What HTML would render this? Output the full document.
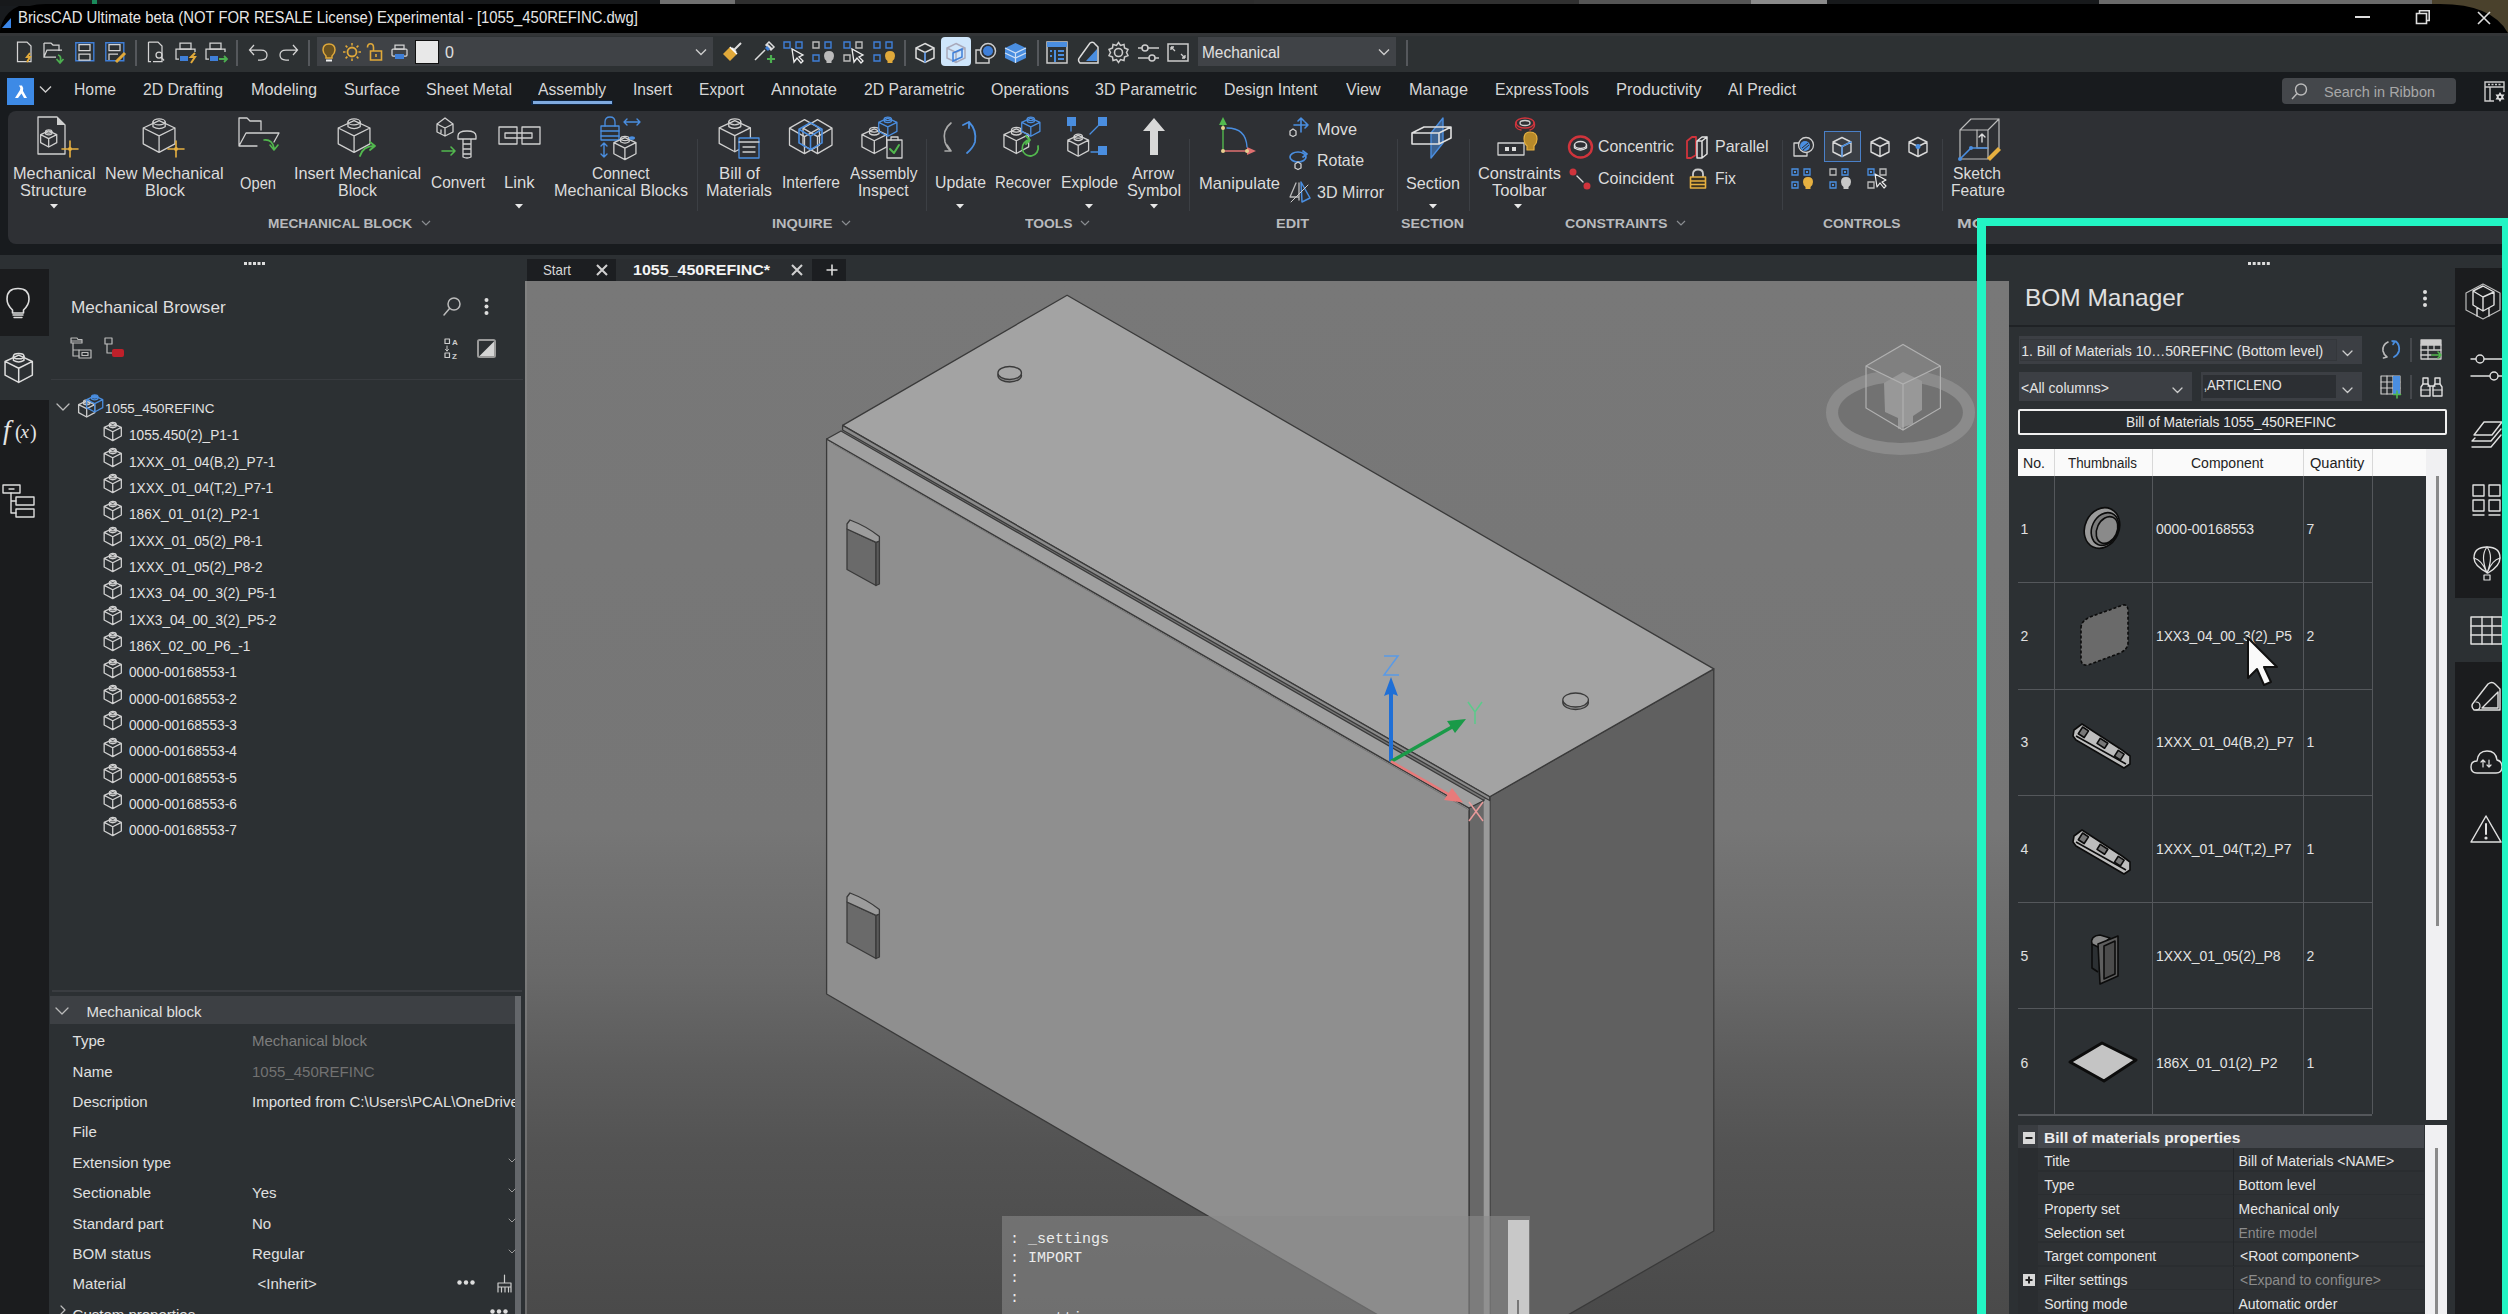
<!DOCTYPE html>
<html><head><meta charset="utf-8">
<style>
*{margin:0;padding:0;box-sizing:border-box}
html,body{width:2508px;height:1314px;overflow:hidden;background:#181b1e;font-family:"Liberation Sans",sans-serif;color:#dcdcdc}
.a{position:absolute}
.t{position:absolute;white-space:nowrap;line-height:1}
svg{position:absolute;overflow:visible}
svg *{vector-effect:non-scaling-stroke}
</style></head><body>

<div class="a" style="left:0;top:0;width:2508px;height:6px;background:#222"></div>
<div class="a" style="left:1577px;top:0;width:247px;height:5px;background:#777"></div>
<div class="a" style="left:2100px;top:0;width:408px;height:40px;background:#4b4230"></div>
<div class="a" style="left:0;top:4px;width:2508px;height:30px;background:#000;border-radius:38px 38px 0 0"></div>
<div class="a" style="left:0;top:33px;width:2508px;height:39px;background:#2d3133"></div>
<div class="a" style="left:0;top:72px;width:2508px;height:38px;background:#181b1e"></div>

<div class="a" style="left:0;top:254px;width:2508px;height:1060px;background:#2c3033"></div>

<div class="a" style="left:0px;top:0px;width:2508px;height:6px;background:#17191b;"></div>
<div class="a" style="left:660px;top:0px;width:75px;height:5px;background:#707070;"></div>
<div class="a" style="left:735px;top:0px;width:519px;height:5px;background:#2e2e2e;"></div>
<div class="a" style="left:1254px;top:0px;width:325px;height:5px;background:#303030;"></div>
<div class="a" style="left:1579px;top:0px;width:172px;height:5px;background:#555;"></div>
<div class="a" style="left:1751px;top:0px;width:76px;height:5px;background:#8a8a8a;"></div>
<div class="a" style="left:2099px;top:0px;width:333px;height:5px;background:#6a6a6a;"></div>
<div class="a" style="left:92px;top:0px;width:5px;height:4px;background:#1a8a5a;"></div>
<div class="a" style="left:2432px;top:0px;width:76px;height:40px;background:#4a412c;"></div>
<div class="a" style="left:0px;top:4px;width:2441px;height:29px;background:#000;border-radius:46px 0 0 0/28px 0 0 0"></div>
<svg style="left:2440px;top:4px;" width="68" height="29" viewBox="0 0 68 29" fill="none"><path d="M0 0 Q52 0 68 29 H0 Z" fill="#000"/></svg>
<svg style="left:2px;top:18px;" width="10" height="11" viewBox="0 0 10 11" fill="none"><path d="M9 0 L9 10 L0 10 Z" fill="#3a86e8"/></svg>
<div class="t" style="left:18.3px;top:10.4px;font-size:16px;color:#e6e6e6;transform:scaleX(0.9288);transform-origin:0 0;">BricsCAD Ultimate beta (NOT FOR RESALE License) Experimental - [1055_450REFINC.dwg]</div>
<div class="a" style="left:2355px;top:16px;width:15px;height:2px;background:#ddd;"></div>
<svg style="left:2416px;top:10px;" width="14" height="14" viewBox="0 0 14 14" fill="none"><rect x="0.5" y="3.5" width="10" height="10" stroke="#ddd" stroke-width="1.6"/><path d="M3.5 3.5 V0.8 H13.2 V10.5 H10.5" stroke="#ddd" stroke-width="1.6"/></svg>
<svg style="left:2477px;top:11px;" width="14" height="14" viewBox="0 0 14 14" fill="none"><path d="M1 1 L13 13 M13 1 L1 13" stroke="#ddd" stroke-width="1.6"/></svg>
<div class="a" style="left:0px;top:33px;width:2508px;height:39px;background:#2d3133;"></div>
<div class="a" style="left:0px;top:33px;width:2508px;height:3px;background:#333537;"></div>
<svg style="left:16px;top:41px;" width="22" height="22" viewBox="0 0 22 22" fill="none"><path d="M1.5 1 H11 L15 5 V20.5 H1.5 Z" stroke="#d4d4d4" stroke-width="1.25"/><path d="M14 12 L11 16 H14 L11 21" stroke="#e0a93a" stroke-width="2"/></svg>
<svg style="left:43px;top:42px;" width="24" height="22" viewBox="0 0 24 22" fill="none"><path d="M1 1 H8 L10 3 H16 V9 M1 1 V15 H13 M1 15 L4 8 H19" stroke="#d4d4d4" stroke-width="1.25"/><path d="M15 13 Q19 14 17 20 M13.5 17 L17 21 L20.5 17" stroke="#4caf50" stroke-width="1.8"/></svg>
<svg style="left:75px;top:42px;" width="20" height="20" viewBox="0 0 20 20" fill="none"><rect x="0.8" y="0.8" width="18" height="18" stroke="#3f7fd8" stroke-width="1.4"/><rect x="4" y="2.5" width="11" height="6" stroke="#d4d4d4" stroke-width="1.25"/><rect x="4" y="12" width="11" height="6" stroke="#d4d4d4" stroke-width="1.25"/></svg>
<svg style="left:105px;top:42px;" width="22" height="21" viewBox="0 0 22 21" fill="none"><rect x="0.8" y="0.8" width="18" height="18" stroke="#3f7fd8" stroke-width="1.4"/><rect x="4" y="2.5" width="11" height="6" stroke="#d4d4d4" stroke-width="1.25"/><path d="M4 18 V12 H13" stroke="#d4d4d4" stroke-width="1.25"/><path d="M11 20 L20 11" stroke="#e0a93a" stroke-width="3"/></svg>
<div class="a" style="left:135px;top:40px;width:1.5px;height:26px;background:#55585c;"></div>
<svg style="left:147px;top:41px;" width="20" height="22" viewBox="0 0 20 22" fill="none"><path d="M1.5 1 H11 L15 5 V20.5 H6 M1.5 1 V20.5 H4" stroke="#d4d4d4" stroke-width="1.25"/><circle cx="12" cy="14" r="3" stroke="#d4d4d4" stroke-width="1.25"/><path d="M14 16 L17 19.5" stroke="#d4d4d4" stroke-width="1.25"/></svg>
<svg style="left:175px;top:42px;" width="23" height="22" viewBox="0 0 23 22" fill="none"><rect x="5" y="1" width="11" height="6" stroke="#d4d4d4" stroke-width="1.25"/><path d="M4 17 H1 V7 H20 V10" stroke="#d4d4d4" stroke-width="1.25"/><rect x="5" y="14" width="8" height="5" fill="#3f7fd8"/><path d="M20 11 L16 15 H20 L16 21" stroke="#e0a93a" stroke-width="2"/></svg>
<svg style="left:205px;top:42px;" width="23" height="22" viewBox="0 0 23 22" fill="none"><rect x="5" y="1" width="11" height="6" stroke="#d4d4d4" stroke-width="1.25"/><path d="M4 17 H1 V7 H20 V10" stroke="#d4d4d4" stroke-width="1.25"/><rect x="5" y="14" width="8" height="5" fill="#3f7fd8"/><path d="M14 17 H22 M19 14 L22 17 L19 20" stroke="#4caf50" stroke-width="1.8"/></svg>
<div class="a" style="left:236px;top:40px;width:1.5px;height:26px;background:#55585c;"></div>
<svg style="left:248px;top:43px;" width="21" height="18" viewBox="0 0 21 18" fill="none"><path d="M2 7 H13 Q19 7 19 12 Q19 17 13 17 H10 M6 2 L1.5 7 L6 12" stroke="#d4d4d4" stroke-width="1.25"/></svg>
<svg style="left:278px;top:43px;" width="21" height="18" viewBox="0 0 21 18" fill="none"><path d="M19 7 H8 Q2 7 2 12 Q2 17 8 17 H11 M15 2 L19.5 7 L15 12" stroke="#d4d4d4" stroke-width="1.25"/></svg>
<div class="a" style="left:308px;top:40px;width:1.5px;height:26px;background:#55585c;"></div>
<div class="a" style="left:317px;top:37px;width:396px;height:29px;background:#3f4246;"></div>
<svg style="left:322px;top:43px;" width="14" height="20" viewBox="0 0 14 20" fill="none"><path d="M7 1 Q13 1 13 7 Q13 10 10 13 V15 H4 V13 Q1 10 1 7 Q1 1 7 1Z" fill="#6a5220" stroke="#e0a93a" stroke-width="1.5"/><path d="M4 17.5 H10" stroke="#eee" stroke-width="2"/></svg>
<svg style="left:343px;top:43px;" width="18" height="18" viewBox="0 0 18 18" fill="none"><circle cx="9" cy="9" r="4.5" stroke="#e0a93a" stroke-width="1.8"/><path d="M9 0 V2.5 M9 15.5 V18 M0 9 H2.5 M15.5 9 H18 M2.6 2.6 L4.4 4.4 M13.6 13.6 L15.4 15.4 M2.6 15.4 L4.4 13.6 M13.6 4.4 L15.4 2.6" stroke="#e0a93a" stroke-width="1.5"/></svg>
<svg style="left:366px;top:43px;" width="16" height="18" viewBox="0 0 16 18" fill="none"><path d="M1.5 4.5 Q1.5 0.8 4.5 0.8 Q7.5 0.8 7.5 4.5 V8" stroke="#e0a93a" stroke-width="1.6"/><rect x="4.5" y="8" width="11" height="9" stroke="#e0a93a" stroke-width="1.6"/><path d="M10 11 V14" stroke="#e0a93a" stroke-width="1.6"/></svg>
<svg style="left:391px;top:44px;" width="17" height="16" viewBox="0 0 17 16" fill="none"><rect x="4" y="1" width="9" height="4" stroke="#d4d4d4" stroke-width="1.25"/><rect x="1" y="5" width="15" height="7" rx="1" stroke="#d4d4d4" stroke-width="1.25"/><rect x="4" y="10" width="9" height="5" fill="#3f7fd8"/></svg>
<div class="a" style="left:415px;top:40px;width:24px;height:24px;background:#e8e8e8;border:1.5px solid #111"></div>
<div class="t" style="left:445.0px;top:44.5px;font-size:16px;color:#e0e0e0;">0</div>
<svg style="left:695px;top:48px;" width="12" height="8" viewBox="0 0 12 8" fill="none"><path d="M1 1.5 L6 6.5 L11 1.5" stroke="#ccc" stroke-width="1.4"/></svg>
<svg style="left:721px;top:41px;" width="22" height="22" viewBox="0 0 22 22" fill="none"><path d="M13 9 L20 2 M11 7 L15 11" stroke="#ddd" stroke-width="2"/><path d="M2 13 L9 6 L16 13 L9 20 Z" fill="#e0a93a"/><path d="M9 6 L16 13" stroke="#fff" stroke-width="1.5"/></svg>
<svg style="left:752px;top:41px;" width="23" height="23" viewBox="0 0 23 23" fill="none"><path d="M3 19 L13 9 M15 3 L20 8 M17 1 L22 6 L19 9 L14 4Z" stroke="#ddd" stroke-width="1.5"/><path d="M14 6 L17 9" stroke="#3f7fd8" stroke-width="3"/><path d="M15 18 H23 M19 14 V22" stroke="#4caf50" stroke-width="2.2"/></svg>
<svg style="left:783px;top:41px;" width="23" height="23" viewBox="0 0 23 23" fill="none"><rect x="1" y="1" width="6" height="6" stroke="#3f7fd8" stroke-width="1.4"/><rect x="13" y="1" width="6" height="6" stroke="#3f7fd8" stroke-width="1.4"/><path d="M9 8 L11 21 L14 17 L18 22 L20 20 L16 16 L20 14 Z" fill="#2c2f33" stroke="#eee" stroke-width="1.3"/></svg>
<svg style="left:812px;top:41px;" width="24" height="23" viewBox="0 0 24 23" fill="none"><rect x="1" y="1" width="6" height="6" stroke="#bbb" stroke-width="1.4"/><rect x="13" y="1" width="6" height="6" stroke="#3f7fd8" stroke-width="1.4"/><rect x="1" y="14" width="6" height="6" stroke="#3f7fd8" stroke-width="1.4"/><path d="M17 10 Q22 10 22 15 Q22 18 19.5 20 V22 H14.5 V20 Q12 18 12 15 Q12 10 17 10Z" fill="#bbb"/></svg>
<svg style="left:843px;top:41px;" width="24" height="23" viewBox="0 0 24 23" fill="none"><rect x="1" y="1" width="6" height="6" stroke="#3f7fd8" stroke-width="1.4"/><rect x="13" y="1" width="6" height="6" stroke="#bbb" stroke-width="1.4"/><rect x="1" y="14" width="6" height="6" stroke="#bbb" stroke-width="1.4"/><path d="M9 8 L11 21 L14 17 L18 22 L20 20 L16 16 L20 14 Z" fill="#2c2f33" stroke="#eee" stroke-width="1.3"/></svg>
<svg style="left:873px;top:41px;" width="24" height="23" viewBox="0 0 24 23" fill="none"><rect x="1" y="1" width="6" height="6" stroke="#3f7fd8" stroke-width="1.4"/><rect x="13" y="1" width="6" height="6" stroke="#3f7fd8" stroke-width="1.4"/><rect x="1" y="14" width="6" height="6" stroke="#3f7fd8" stroke-width="1.4"/><path d="M17 10 Q22 10 22 15 Q22 18 19.5 20 V22 H14.5 V20 Q12 18 12 15 Q12 10 17 10Z" fill="#e0a93a"/></svg>
<div class="a" style="left:904px;top:40px;width:1.5px;height:26px;background:#55585c;"></div>
<svg style="left:914px;top:42px;" width="22" height="22" viewBox="0 0 22 22" fill="none"><path d="M11 1.5 L20 6 V16 L11 20.5 L2 16 V6 Z M2 6 L11 10.5 L20 6 M11 10.5 V20.5" stroke="#ddd" stroke-width="1.5"/><path d="M11 10.5 V20.5" stroke="#3f7fd8" stroke-width="1.5"/></svg>
<div class="a" style="left:941px;top:37px;width:30px;height:29px;background:#cfe6fb;border-radius:4px"></div>
<svg style="left:945px;top:42px;" width="22" height="22" viewBox="0 0 22 22" fill="none"><path d="M11 1.5 L20 6 V16 L11 20.5 L2 16 V6 Z M2 6 L11 10.5 L20 6 M11 10.5 V20.5" stroke="#aab" stroke-width="1.5"/><path d="M8 11 L17 7 V15 L8 19Z" stroke="#3f7fd8" stroke-width="1.5"/></svg>
<svg style="left:975px;top:42px;" width="23" height="22" viewBox="0 0 23 22" fill="none"><rect x="1" y="8" width="13" height="13" stroke="#ccc" stroke-width="1.5"/><circle cx="13" cy="9" r="7.5" stroke="#ccc" stroke-width="1.5" fill="#2c2f33"/><circle cx="13" cy="9" r="5" fill="#3f7fd8"/></svg>
<svg style="left:1004px;top:42px;" width="23" height="22" viewBox="0 0 23 22" fill="none"><path d="M11.5 1 L22 6 V16 L11.5 21 L1 16 V6 Z" fill="#4a8ee0"/><path d="M1 6 L11.5 11 L22 6 M11.5 11 V21 M1 11 L11.5 16 L22 11" stroke="#cfe0f5" stroke-width="1.2"/></svg>
<div class="a" style="left:1037px;top:40px;width:1.5px;height:26px;background:#55585c;"></div>
<svg style="left:1046px;top:41px;" width="22" height="23" viewBox="0 0 22 23" fill="none"><rect x="1" y="1" width="20" height="21" stroke="#ccc" stroke-width="1.5"/><rect x="1" y="1" width="20" height="5" fill="#4a8ee0"/><path d="M4 10 H6 M4 15 H6 M9 9 V21 M12 10 H18 M12 14 H18 M12 18 H18" stroke="#4a8ee0" stroke-width="2"/></svg>
<svg style="left:1077px;top:41px;" width="22" height="23" viewBox="0 0 22 23" fill="none"><path d="M3 22 Q0 19 3 16 L13 2 Q16 0 18 3 L21 6 V22 Z" stroke="#ddd" stroke-width="1.5"/><path d="M9 20 L20 8 V20Z" fill="#4a8ee0"/></svg>
<svg style="left:1107px;top:41px;" width="23" height="23" viewBox="0 0 23 23" fill="none"><circle cx="11.5" cy="11.5" r="4" stroke="#ccc" stroke-width="1.6"/><path d="M11.5 1.5 L13.5 4.5 L17 3.5 L17.5 7 L21 8.5 L19.5 11.5 L21 14.5 L17.5 16 L17 19.5 L13.5 18.5 L11.5 21.5 L9.5 18.5 L6 19.5 L5.5 16 L2 14.5 L3.5 11.5 L2 8.5 L5.5 7 L6 3.5 L9.5 4.5 Z" stroke="#ccc" stroke-width="1.5"/></svg>
<svg style="left:1137px;top:43px;" width="23" height="20" viewBox="0 0 23 20" fill="none"><path d="M1 5 H22 M1 15 H22" stroke="#ccc" stroke-width="1.5"/><circle cx="8" cy="5" r="3" fill="#2c2f33" stroke="#ccc" stroke-width="1.5"/><circle cx="15" cy="15" r="3" fill="#2c2f33" stroke="#ccc" stroke-width="1.5"/></svg>
<svg style="left:1167px;top:43px;" width="22" height="20" viewBox="0 0 22 20" fill="none"><rect x="1" y="1" width="20" height="17" stroke="#ccc" stroke-width="1.5"/><path d="M4 4 L8 8 M4 4 H7 M4 4 V7 M18 15 L14 11 M18 15 H15 M18 15 V12" stroke="#ccc" stroke-width="1.3"/></svg>
<div class="a" style="left:1198px;top:37px;width:198px;height:29px;background:#404347;"></div>
<div class="t" style="left:1202.0px;top:45.0px;font-size:16px;color:#e0e0e0;transform:scaleX(0.9638);transform-origin:0 0;">Mechanical</div>
<svg style="left:1378px;top:48px;" width="12" height="8" viewBox="0 0 12 8" fill="none"><path d="M1 1.5 L6 6.5 L11 1.5" stroke="#ccc" stroke-width="1.4"/></svg>
<div class="a" style="left:1406px;top:40px;width:1.5px;height:26px;background:#55585c;"></div>
<div class="a" style="left:0px;top:72px;width:2508px;height:38px;background:#181b1e;"></div>
<div class="a" style="left:7px;top:78px;width:27px;height:27px;background:#3d8ae6;"></div>
<svg style="left:12px;top:84px;" width="17" height="15" viewBox="0 0 17 15" fill="none"><path d="M3 14 L8 6 Q9 4 7 1.5 H10 Q12 4 11 7 L15 14 H12 L9.5 9.5 L6 14 Z" fill="#fff"/></svg>
<svg style="left:39px;top:85px;" width="14" height="9" viewBox="0 0 14 9" fill="none"><path d="M1 1.5 L6.5 7 L12 1.5" stroke="#ccc" stroke-width="1.4"/></svg>
<div class="t" style="left:74.0px;top:81.0px;font-size:17px;color:#d6d6d6;transform:scaleX(0.9262);transform-origin:0 0;">Home</div>
<div class="t" style="left:143.0px;top:81.0px;font-size:17px;color:#d6d6d6;transform:scaleX(0.9305);transform-origin:0 0;">2D Drafting</div>
<div class="t" style="left:251.0px;top:81.0px;font-size:17px;color:#d6d6d6;transform:scaleX(0.9567);transform-origin:0 0;">Modeling</div>
<div class="t" style="left:344.0px;top:81.0px;font-size:17px;color:#d6d6d6;transform:scaleX(0.9558);transform-origin:0 0;">Surface</div>
<div class="t" style="left:426.0px;top:81.0px;font-size:17px;color:#d6d6d6;transform:scaleX(0.9480);transform-origin:0 0;">Sheet Metal</div>
<div class="t" style="left:538.0px;top:81.0px;font-size:17px;color:#d6d6d6;transform:scaleX(0.9228);transform-origin:0 0;">Assembly</div>
<div class="t" style="left:633.0px;top:81.0px;font-size:17px;color:#d6d6d6;transform:scaleX(0.9173);transform-origin:0 0;">Insert</div>
<div class="t" style="left:699.0px;top:81.0px;font-size:17px;color:#d6d6d6;transform:scaleX(0.9159);transform-origin:0 0;">Export</div>
<div class="t" style="left:771.0px;top:81.0px;font-size:17px;color:#d6d6d6;transform:scaleX(0.9697);transform-origin:0 0;">Annotate</div>
<div class="t" style="left:864.0px;top:81.0px;font-size:17px;color:#d6d6d6;transform:scaleX(0.9251);transform-origin:0 0;">2D Parametric</div>
<div class="t" style="left:991.0px;top:81.0px;font-size:17px;color:#d6d6d6;transform:scaleX(0.9380);transform-origin:0 0;">Operations</div>
<div class="t" style="left:1095.0px;top:81.0px;font-size:17px;color:#d6d6d6;transform:scaleX(0.9389);transform-origin:0 0;">3D Parametric</div>
<div class="t" style="left:1223.5px;top:81.0px;font-size:17px;color:#d6d6d6;transform:scaleX(0.9334);transform-origin:0 0;">Design Intent</div>
<div class="t" style="left:1345.5px;top:81.0px;font-size:17px;color:#d6d6d6;transform:scaleX(0.9442);transform-origin:0 0;">View</div>
<div class="t" style="left:1409.0px;top:81.0px;font-size:17px;color:#d6d6d6;transform:scaleX(0.9604);transform-origin:0 0;">Manage</div>
<div class="t" style="left:1495.0px;top:81.0px;font-size:17px;color:#d6d6d6;transform:scaleX(0.9298);transform-origin:0 0;">ExpressTools</div>
<div class="t" style="left:1616.0px;top:81.0px;font-size:17px;color:#d6d6d6;transform:scaleX(0.9731);transform-origin:0 0;">Productivity</div>
<div class="t" style="left:1728.0px;top:81.0px;font-size:17px;color:#d6d6d6;transform:scaleX(0.9227);transform-origin:0 0;">AI Predict</div>
<div class="a" style="left:531px;top:99.5px;width:82px;height:5.5px;background:#0e2440;"></div>
<div class="a" style="left:532.5px;top:101px;width:79px;height:2.6px;background:#7eaae0;"></div>
<div class="a" style="left:2282px;top:78px;width:174px;height:26px;background:#44474b;border-radius:4px"></div>
<svg style="left:2291px;top:83px;" width="16" height="18" viewBox="0 0 16 18" fill="none"><circle cx="10" cy="6.5" r="5.5" stroke="#bbb" stroke-width="1.4"/><path d="M6 10.5 L1 16" stroke="#bbb" stroke-width="1.4"/></svg>
<div class="t" style="left:2324.0px;top:85.1px;font-size:14px;color:#a8a8a8;transform:scaleX(1.0335);transform-origin:0 0;">Search in Ribbon</div>
<svg style="left:2484px;top:81px;" width="21" height="22" viewBox="0 0 21 22" fill="none"><rect x="1" y="1" width="19" height="19" stroke="#ccc" stroke-width="1.4"/><path d="M1 6 H20 M6 6 V20" stroke="#ccc" stroke-width="1.4"/><path d="M4 3.5 H17" stroke="#ccc" stroke-width="1.4" stroke-dasharray="2 1.5"/><rect x="10" y="11" width="11" height="11" fill="#181b1e"/><path d="M16 11 L17.5 13.5 L20.5 13.5 L19 16 L20.5 18.5 L17.5 18.5 L16 21 L14.5 18.5 L11.5 18.5 L13 16 L11.5 13.5 L14.5 13.5 Z" fill="#ddd"/><circle cx="16" cy="16" r="1.3" fill="#181b1e"/></svg>
<div class="a" style="left:8px;top:111px;width:2520px;height:133px;background:#2e3034;border-radius:8px"></div>
<svg style="left:36px;top:116px;" width="44" height="44" viewBox="0 0 44 44" fill="none"><path d="M2 1 H21 L29 9 V38 H2 Z" stroke="#cfcfcf" stroke-width="1.3" stroke-linejoin="round" stroke-linecap="round"/><path d="M21 1 V9 H29" fill="#cfcfcf"/><g transform="translate(4 13) scale(0.62)"><path d="M1 9 L14 3 L27 9 V22 L14 29 L1 22 Z M1 9 L14 15.5 L27 9 M14 15.5 V29" stroke="#cfcfcf" stroke-width="1.3" stroke-linejoin="round" stroke-linecap="round"/><ellipse cx="14" cy="4" rx="5" ry="2.5" stroke="#cfcfcf" stroke-width="1.3" stroke-linejoin="round" stroke-linecap="round"/><path d="M9 4 V8 Q14 11 19 8 V4" stroke="#cfcfcf" stroke-width="1.3" stroke-linejoin="round" stroke-linecap="round"/></g><path d="M34 25 V41 M26 33 H42" stroke="#e6b040" stroke-width="1.6" stroke-linejoin="round" stroke-linecap="round"/><circle cx="34" cy="33" r="2" fill="#e6b040"/></svg>
<div class="t" style="left:12.5px;top:165.4px;font-size:16.5px;color:#dcdcdc;transform:scaleX(0.9885);transform-origin:0 0;">Mechanical</div>
<div class="t" style="left:20.0px;top:182.2px;font-size:16.5px;color:#dcdcdc;transform:scaleX(0.9934);transform-origin:0 0;">Structure</div>
<svg style="left:49.5px;top:204px;" width="8" height="5" viewBox="0 0 8 5" fill="none"><path d="M0 0 H8 L4 4.5Z" fill="#e8e8e8"/></svg>
<svg style="left:141px;top:116px;" width="44" height="44" viewBox="0 0 44 44" fill="none"><g transform="translate(1 1) scale(1.22)"><path d="M1 9 L14 3 L27 9 V22 L14 29 L1 22 Z M1 9 L14 15.5 L27 9 M14 15.5 V29" stroke="#cfcfcf" stroke-width="1.3" stroke-linejoin="round" stroke-linecap="round"/><ellipse cx="14" cy="4" rx="5" ry="2.5" stroke="#cfcfcf" stroke-width="1.3" stroke-linejoin="round" stroke-linecap="round"/><path d="M9 4 V8 Q14 11 19 8 V4" stroke="#cfcfcf" stroke-width="1.3" stroke-linejoin="round" stroke-linecap="round"/></g><path d="M35 25 V41 M27 33 H43" stroke="#e6b040" stroke-width="1.6" stroke-linejoin="round" stroke-linecap="round"/><circle cx="35" cy="33" r="2" fill="#e6b040"/></svg>
<div class="t" style="left:104.5px;top:165.4px;font-size:16.5px;color:#dcdcdc;transform:scaleX(0.9789);transform-origin:0 0;">New Mechanical</div>
<div class="t" style="left:144.5px;top:182.2px;font-size:16.5px;color:#dcdcdc;transform:scaleX(0.9914);transform-origin:0 0;">Block</div>
<svg style="left:237px;top:117px;" width="44" height="42" viewBox="0 0 44 42" fill="none"><path d="M2 1 H10 L13 4 H24 V13 M2 1 V29 H20 M2 29 L9 16 H42 L37 25" stroke="#cfcfcf" stroke-width="1.3" stroke-linejoin="round" stroke-linecap="round"/><path d="M27 23 Q35 22 37 31 M33 28 L37 33 L41 28" stroke="#52b84e" stroke-width="1.6" stroke-linejoin="round" stroke-linecap="round"/></svg>
<div class="t" style="left:240.0px;top:174.7px;font-size:16.5px;color:#dcdcdc;transform:scaleX(0.8919);transform-origin:0 0;">Open</div>
<svg style="left:336px;top:116px;" width="44" height="44" viewBox="0 0 44 44" fill="none"><g transform="translate(1 1) scale(1.22)"><path d="M1 9 L14 3 L27 9 V22 L14 29 L1 22 Z M1 9 L14 15.5 L27 9 M14 15.5 V29" stroke="#cfcfcf" stroke-width="1.3" stroke-linejoin="round" stroke-linecap="round"/><ellipse cx="14" cy="4" rx="5" ry="2.5" stroke="#cfcfcf" stroke-width="1.3" stroke-linejoin="round" stroke-linecap="round"/><path d="M9 4 V8 Q14 11 19 8 V4" stroke="#cfcfcf" stroke-width="1.3" stroke-linejoin="round" stroke-linecap="round"/></g><path d="M24 40 Q27 30 38 30 M34 26 L39 30 L34 34" stroke="#52b84e" stroke-width="1.8" stroke-linejoin="round" stroke-linecap="round"/></svg>
<div class="t" style="left:294.0px;top:165.4px;font-size:16.5px;color:#dcdcdc;transform:scaleX(0.9821);transform-origin:0 0;">Insert Mechanical</div>
<div class="t" style="left:338.0px;top:182.2px;font-size:16.5px;color:#dcdcdc;transform:scaleX(0.9666);transform-origin:0 0;">Block</div>
<svg style="left:436px;top:116px;" width="44" height="44" viewBox="0 0 44 44" fill="none"><path d="M1 8 L9 2 L17 8 V16 L9 20 L1 16 Z M1 8 L9 12 L17 8 M9 12 V20 M5 14 V17" stroke="#cfcfcf" stroke-width="1.3" stroke-linejoin="round" stroke-linecap="round"/><path d="M22 20 Q22 15 31 15 Q40 15 40 20 V23 H22Z M27 23 V41 Q31 43 35 41 V23 M27 28 H35 M27 33 H35 M27 38 H35" stroke="#cfcfcf" stroke-width="1.3" stroke-linejoin="round" stroke-linecap="round"/><path d="M6 35 H19 M15 31 L19 35 L15 39" stroke="#52b84e" stroke-width="1.6" stroke-linejoin="round" stroke-linecap="round"/></svg>
<div class="t" style="left:431.0px;top:174.4px;font-size:16.5px;color:#dcdcdc;transform:scaleX(0.9347);transform-origin:0 0;">Convert</div>
<svg style="left:498px;top:126px;" width="44" height="22" viewBox="0 0 44 22" fill="none"><rect x="1" y="1" width="18" height="17" stroke="#cfcfcf" stroke-width="1.3" stroke-linejoin="round" stroke-linecap="round"/><rect x="24" y="1" width="18" height="17" stroke="#cfcfcf" stroke-width="1.3" stroke-linejoin="round" stroke-linecap="round"/><path d="M7 7 H34 V12 H7Z" stroke="#cfcfcf" stroke-width="1.3" stroke-linejoin="round" stroke-linecap="round"/></svg>
<div class="t" style="left:504.0px;top:174.4px;font-size:16.5px;color:#dcdcdc;transform:scaleX(1.0109);transform-origin:0 0;">Link</div>
<svg style="left:515px;top:204px;" width="8" height="5" viewBox="0 0 8 5" fill="none"><path d="M0 0 H8 L4 4.5Z" fill="#e8e8e8"/></svg>
<svg style="left:600px;top:116px;" width="44" height="44" viewBox="0 0 44 44" fill="none"><path d="M5 10 V6 Q5 1 10 1 Q15 1 15 6 V10" stroke="#4a8ee0" stroke-width="1.3" stroke-linejoin="round" stroke-linecap="round"/><rect x="1" y="10" width="18" height="14" stroke="#4a8ee0" stroke-width="1.3" stroke-linejoin="round" stroke-linecap="round"/><path d="M1 15 H19 M1 20 H19" stroke="#4a8ee0" stroke-width="1.3" stroke-linejoin="round" stroke-linecap="round"/><path d="M24 6 H40 M27 3 L24 6 L27 9 M37 3 L40 6 L37 9 M4 27 V41 M1 30 L4 27 L7 30 M1 38 L4 41 L7 38" stroke="#4a8ee0" stroke-width="1.4" stroke-linejoin="round" stroke-linecap="round"/><g transform="translate(13 19) scale(0.85)"><path d="M1 9 L14 3 L27 9 V22 L14 29 L1 22 Z M1 9 L14 15.5 L27 9 M14 15.5 V29" stroke="#cfcfcf" stroke-width="1.3" stroke-linejoin="round" stroke-linecap="round"/><ellipse cx="14" cy="4" rx="5" ry="2.5" stroke="#cfcfcf" stroke-width="1.3" stroke-linejoin="round" stroke-linecap="round"/><path d="M9 4 V8 Q14 11 19 8 V4" stroke="#cfcfcf" stroke-width="1.3" stroke-linejoin="round" stroke-linecap="round"/></g><ellipse cx="32" cy="22" rx="3" ry="1.8" fill="#4a8ee0"/></svg>
<div class="t" style="left:591.5px;top:165.4px;font-size:16.5px;color:#dcdcdc;transform:scaleX(0.9356);transform-origin:0 0;">Connect</div>
<div class="t" style="left:554.0px;top:182.2px;font-size:16.5px;color:#dcdcdc;transform:scaleX(0.9807);transform-origin:0 0;">Mechanical Blocks</div>
<div class="t" style="left:268.0px;top:218.1px;font-size:12px;color:#b8babd;font-weight:bold;transform:scaleX(1.1389);transform-origin:0 0;">MECHANICAL BLOCK</div>
<svg style="left:421px;top:220px;" width="10" height="6" viewBox="0 0 10 6" fill="none"><path d="M1 1 L5 5 L9 1" stroke="#8a8d91" stroke-width="1.2"/></svg>
<div class="a" style="left:697px;top:139px;width:1px;height:72px;background:#3c3f44;"></div>
<svg style="left:717px;top:116px;" width="44" height="44" viewBox="0 0 44 44" fill="none"><g transform="translate(1 1) scale(1.2)"><path d="M1 9 L14 3 L27 9 V22 L14 29 L1 22 Z M1 9 L14 15.5 L27 9 M14 15.5 V29" stroke="#cfcfcf" stroke-width="1.3" stroke-linejoin="round" stroke-linecap="round"/><ellipse cx="14" cy="4" rx="5" ry="2.5" stroke="#cfcfcf" stroke-width="1.3" stroke-linejoin="round" stroke-linecap="round"/><path d="M9 4 V8 Q14 11 19 8 V4" stroke="#cfcfcf" stroke-width="1.3" stroke-linejoin="round" stroke-linecap="round"/></g><rect x="22" y="22" width="20" height="20" fill="#2e3034" stroke="#4a8ee0" stroke-width="1.3" stroke-linejoin="round" stroke-linecap="round"/><path d="M22 26 H42 M26 31 H38 M26 36 H38" stroke="#cfcfcf" stroke-width="1.3" stroke-linejoin="round" stroke-linecap="round"/></svg>
<div class="t" style="left:719.0px;top:164.8px;font-size:16.5px;color:#dcdcdc;transform:scaleX(1.0162);transform-origin:0 0;">Bill of</div>
<div class="t" style="left:706.0px;top:181.7px;font-size:16.5px;color:#dcdcdc;transform:scaleX(0.9860);transform-origin:0 0;">Materials</div>
<svg style="left:789px;top:117px;" width="44" height="40" viewBox="0 0 44 40" fill="none"><path d="M15.5 2.6 L30.5 11.1 L30.5 28.1 L15.5 36.6 L0.5 28.1 L0.5 11.1 Z M0.5 11.1 L15.5 19.6 L30.5 11.1 M15.5 19.6 V36.6" stroke="#cfcfcf" stroke-width="1.3" stroke-linejoin="round"/><path d="M28.5 2.6 L43.0 11.1 L43.0 28.1 L28.5 36.6 L14.0 28.1 L14.0 11.1 Z M14.0 11.1 L28.5 19.6 L43.0 11.1 M28.5 19.6 V36.6" stroke="#cfcfcf" stroke-width="1.3" stroke-linejoin="round"/><path d="M21.5 5.6 L33.0 12.3 L33.0 25.9 L21.5 32.6 L10.0 25.9 L10.0 12.3 Z M10.0 12.3 L21.5 19.1 L33.0 12.3 M21.5 19.1 V32.6" stroke="#4a8ee0" stroke-width="1.6" stroke-linejoin="round"/></svg>
<div class="t" style="left:782.0px;top:174.4px;font-size:16.5px;color:#dcdcdc;transform:scaleX(0.9439);transform-origin:0 0;">Interfere</div>
<svg style="left:861px;top:116px;" width="44" height="44" viewBox="0 0 44 44" fill="none"><g transform="translate(0 10) scale(0.95)"><path d="M1 9 L14 3 L27 9 V22 L14 29 L1 22 Z M1 9 L14 15.5 L27 9 M14 15.5 V29" stroke="#cfcfcf" stroke-width="1.3" stroke-linejoin="round" stroke-linecap="round"/><ellipse cx="14" cy="4" rx="5" ry="2.5" stroke="#cfcfcf" stroke-width="1.3" stroke-linejoin="round" stroke-linecap="round"/><path d="M9 4 V8 Q14 11 19 8 V4" stroke="#cfcfcf" stroke-width="1.3" stroke-linejoin="round" stroke-linecap="round"/></g><g transform="translate(17 0) scale(0.7)"><path d="M1 9 L14 3 L27 9 V22 L14 29 L1 22 Z M1 9 L14 15.5 L27 9 M14 15.5 V29" stroke="#4a8ee0" stroke-width="1.3" stroke-linejoin="round" stroke-linecap="round"/><ellipse cx="14" cy="4" rx="5" ry="2.5" stroke="#4a8ee0" stroke-width="1.3" stroke-linejoin="round" stroke-linecap="round"/><path d="M9 4 V8 Q14 11 19 8 V4" stroke="#4a8ee0" stroke-width="1.3" stroke-linejoin="round" stroke-linecap="round"/></g><rect x="26" y="24" width="15" height="18" fill="#2e3034" stroke="#cfcfcf" stroke-width="1.3" stroke-linejoin="round" stroke-linecap="round"/><path d="M30 24 V21 H37 V24" stroke="#cfcfcf" stroke-width="1.3" stroke-linejoin="round" stroke-linecap="round"/><path d="M29 33 L33 37 L38 29" stroke="#52b84e" stroke-width="2" stroke-linejoin="round" stroke-linecap="round"/></svg>
<div class="t" style="left:849.5px;top:164.8px;font-size:16.5px;color:#dcdcdc;transform:scaleX(0.9438);transform-origin:0 0;">Assembly</div>
<div class="t" style="left:857.5px;top:181.7px;font-size:16.5px;color:#dcdcdc;transform:scaleX(0.9493);transform-origin:0 0;">Inspect</div>
<div class="t" style="left:772.0px;top:218.1px;font-size:12px;color:#b8babd;font-weight:bold;transform:scaleX(1.2099);transform-origin:0 0;">INQUIRE</div>
<svg style="left:841px;top:220px;" width="10" height="6" viewBox="0 0 10 6" fill="none"><path d="M1 1 L5 5 L9 1" stroke="#8a8d91" stroke-width="1.2"/></svg>
<div class="a" style="left:926px;top:139px;width:1px;height:72px;background:#3c3f44;"></div>
<svg style="left:941px;top:120px;" width="40" height="38" viewBox="0 0 40 38" fill="none"><path d="M10 3 Q1 10 4 22 Q6 28 10 31 M6 25 L10 31 L4 31" stroke="#aaa" stroke-width="1.6" stroke-linejoin="round" stroke-linecap="round"/><path d="M28 2 Q36 10 34 22 Q32 28 26 33 M22 5 L28 2 L28 8" stroke="#4a8ee0" stroke-width="1.8" stroke-linejoin="round" stroke-linecap="round"/></svg>
<div class="t" style="left:935.0px;top:174.4px;font-size:16.5px;color:#dcdcdc;transform:scaleX(0.9585);transform-origin:0 0;">Update</div>
<svg style="left:956px;top:204px;" width="8" height="5" viewBox="0 0 8 5" fill="none"><path d="M0 0 H8 L4 4.5Z" fill="#e8e8e8"/></svg>
<svg style="left:1002px;top:116px;" width="44" height="44" viewBox="0 0 44 44" fill="none"><g transform="translate(1 10) scale(0.95)"><path d="M1 9 L14 3 L27 9 V22 L14 29 L1 22 Z M1 9 L14 15.5 L27 9 M14 15.5 V29" stroke="#cfcfcf" stroke-width="1.3" stroke-linejoin="round" stroke-linecap="round"/><ellipse cx="14" cy="4" rx="5" ry="2.5" stroke="#cfcfcf" stroke-width="1.3" stroke-linejoin="round" stroke-linecap="round"/><path d="M9 4 V8 Q14 11 19 8 V4" stroke="#cfcfcf" stroke-width="1.3" stroke-linejoin="round" stroke-linecap="round"/></g><g transform="translate(19 0) scale(0.7)"><path d="M1 9 L14 3 L27 9 V22 L14 29 L1 22 Z M1 9 L14 15.5 L27 9 M14 15.5 V29" stroke="#4a8ee0" stroke-width="1.3" stroke-linejoin="round" stroke-linecap="round"/><ellipse cx="14" cy="4" rx="5" ry="2.5" stroke="#4a8ee0" stroke-width="1.3" stroke-linejoin="round" stroke-linecap="round"/><path d="M9 4 V8 Q14 11 19 8 V4" stroke="#4a8ee0" stroke-width="1.3" stroke-linejoin="round" stroke-linecap="round"/></g><path d="M36 30 A8 8 0 1 1 28 24 M24 20 L28 24 L24 28" stroke="#52b84e" stroke-width="1.8" stroke-linejoin="round" stroke-linecap="round"/></svg>
<div class="t" style="left:995.0px;top:174.4px;font-size:16.5px;color:#dcdcdc;transform:scaleX(0.9114);transform-origin:0 0;">Recover</div>
<svg style="left:1066px;top:116px;" width="44" height="44" viewBox="0 0 44 44" fill="none"><g transform="translate(1 17) scale(0.8)"><path d="M1 9 L14 3 L27 9 V22 L14 29 L1 22 Z M1 9 L14 15.5 L27 9 M14 15.5 V29" stroke="#cfcfcf" stroke-width="1.3" stroke-linejoin="round" stroke-linecap="round"/><ellipse cx="14" cy="4" rx="5" ry="2.5" stroke="#cfcfcf" stroke-width="1.3" stroke-linejoin="round" stroke-linecap="round"/><path d="M9 4 V8 Q14 11 19 8 V4" stroke="#cfcfcf" stroke-width="1.3" stroke-linejoin="round" stroke-linecap="round"/></g><rect x="1" y="1" width="9" height="9" fill="#4a8ee0"/><path d="M5 10 V15" stroke="#4a8ee0" stroke-width="1.3" stroke-linejoin="round" stroke-linecap="round"/><rect x="32" y="1" width="9" height="9" fill="#4a8ee0"/><path d="M32 10 L24 18" stroke="#4a8ee0" stroke-width="1.3" stroke-linejoin="round" stroke-linecap="round"/><rect x="32" y="30" width="9" height="9" fill="#4a8ee0"/><path d="M32 36 H25" stroke="#4a8ee0" stroke-width="1.3" stroke-linejoin="round" stroke-linecap="round"/></svg>
<div class="t" style="left:1061.0px;top:174.4px;font-size:16.5px;color:#dcdcdc;transform:scaleX(0.9559);transform-origin:0 0;">Explode</div>
<svg style="left:1085px;top:204px;" width="8" height="5" viewBox="0 0 8 5" fill="none"><path d="M0 0 H8 L4 4.5Z" fill="#e8e8e8"/></svg>
<svg style="left:1141px;top:117px;" width="26" height="42" viewBox="0 0 26 42" fill="none"><path d="M13 1 L24 14 H17 V38 H9 V14 H2 Z" fill="#d8d8d8"/></svg>
<div class="t" style="left:1132.0px;top:164.8px;font-size:16.5px;color:#dcdcdc;transform:scaleX(0.9748);transform-origin:0 0;">Arrow</div>
<div class="t" style="left:1127.0px;top:181.7px;font-size:16.5px;color:#dcdcdc;transform:scaleX(0.9815);transform-origin:0 0;">Symbol</div>
<svg style="left:1150px;top:204px;" width="8" height="5" viewBox="0 0 8 5" fill="none"><path d="M0 0 H8 L4 4.5Z" fill="#e8e8e8"/></svg>
<div class="t" style="left:1024.5px;top:218.1px;font-size:12px;color:#b8babd;font-weight:bold;transform:scaleX(1.1553);transform-origin:0 0;">TOOLS</div>
<svg style="left:1080px;top:220px;" width="10" height="6" viewBox="0 0 10 6" fill="none"><path d="M1 1 L5 5 L9 1" stroke="#8a8d91" stroke-width="1.2"/></svg>
<div class="a" style="left:1189px;top:139px;width:1px;height:72px;background:#3c3f44;"></div>
<svg style="left:1216px;top:116px;" width="44" height="44" viewBox="0 0 44 44" fill="none"><path d="M7 1 L11 9 H3Z" fill="#52b84e"/><path d="M7 9 V34" stroke="#52b84e" stroke-width="1.4" stroke-linejoin="round" stroke-linecap="round"/><path d="M7 35 H29" stroke="#e07070" stroke-width="1.6" stroke-linejoin="round" stroke-linecap="round"/><path d="M31 31 L40 35 L31 39Z" fill="#e07070"/><path d="M11 12 Q30 12 31 31" stroke="#4a8ee0" stroke-width="1.4" stroke-linejoin="round" stroke-linecap="round"/><circle cx="7" cy="12" r="2" fill="#e8d090"/><circle cx="7" cy="35" r="2" fill="#e8d090"/><circle cx="31" cy="35" r="2" fill="#e8d090"/></svg>
<div class="t" style="left:1199.0px;top:175.2px;font-size:16.5px;color:#dcdcdc;transform:scaleX(1.0035);transform-origin:0 0;">Manipulate</div>
<svg style="left:1288px;top:117px;" width="22" height="20" viewBox="0 0 22 20" fill="none"><path d="M13 1 V15 M6 8 H20 M10 4 L13 1 L16 4 M17 5 L20 8 L17 11" stroke="#4a8ee0" stroke-width="1.6" stroke-linejoin="round" stroke-linecap="round"/><path d="M2 14 L5 12 L8 14 V18 L5 19.5 L2 18Z" stroke="#cfcfcf" stroke-width="1.3" stroke-linejoin="round" stroke-linecap="round"/></svg>
<div class="t" style="left:1317.0px;top:120.5px;font-size:16.5px;color:#dcdcdc;transform:scaleX(0.9914);transform-origin:0 0;">Move</div>
<svg style="left:1288px;top:149px;" width="22" height="22" viewBox="0 0 22 22" fill="none"><ellipse cx="10" cy="8" rx="8" ry="5" stroke="#4a8ee0" stroke-width="1.7" stroke-linejoin="round" stroke-linecap="round"/><path d="M15 2 L19 5 L15 8" stroke="#4a8ee0" stroke-width="1.7" stroke-linejoin="round" stroke-linecap="round"/><path d="M7 15 L10 13 L13 15 V19 L10 20.5 L7 19Z" stroke="#cfcfcf" stroke-width="1.3" stroke-linejoin="round" stroke-linecap="round"/></svg>
<div class="t" style="left:1317.0px;top:152.3px;font-size:16.5px;color:#dcdcdc;transform:scaleX(0.9668);transform-origin:0 0;">Rotate</div>
<svg style="left:1288px;top:180px;" width="24" height="24" viewBox="0 0 24 24" fill="none"><path d="M8 3 L2 17 H10 M11 3 V20" stroke="#bbb" stroke-width="1.3" stroke-linejoin="round" stroke-linecap="round"/><path d="M13 2 L22 18 L14 22Z" stroke="#4a8ee0" stroke-width="1.5" stroke-linejoin="round" stroke-linecap="round"/><path d="M3 22 L20 5" stroke="#ccc" stroke-width="1" stroke-linejoin="round" stroke-linecap="round"/></svg>
<div class="t" style="left:1317.0px;top:183.6px;font-size:16.5px;color:#dcdcdc;transform:scaleX(0.9745);transform-origin:0 0;">3D Mirror</div>
<div class="t" style="left:1276.0px;top:218.1px;font-size:12px;color:#b8babd;font-weight:bold;transform:scaleX(1.2073);transform-origin:0 0;">EDIT</div>
<div class="a" style="left:1397px;top:139px;width:1px;height:72px;background:#3c3f44;"></div>
<svg style="left:1411px;top:116px;" width="44" height="44" viewBox="0 0 44 44" fill="none"><path d="M20 17 L32 2 V27 L20 42Z" fill="#4a8ee0" fill-opacity="0.55" stroke="#4a8ee0" stroke-width="1.4" stroke-linejoin="round" stroke-linecap="round"/><path d="M1 17 L13 11 H40 V22 L28 28 H1 Z M1 17 H28 L40 11 M28 17 V28" stroke="#e0e0e0" stroke-width="1.6" stroke-linejoin="round" stroke-linecap="round"/></svg>
<div class="t" style="left:1406.0px;top:175.2px;font-size:16.5px;color:#dcdcdc;transform:scaleX(0.9812);transform-origin:0 0;">Section</div>
<svg style="left:1429px;top:204px;" width="8" height="5" viewBox="0 0 8 5" fill="none"><path d="M0 0 H8 L4 4.5Z" fill="#e8e8e8"/></svg>
<div class="t" style="left:1401.0px;top:218.1px;font-size:12px;color:#b8babd;font-weight:bold;transform:scaleX(1.1811);transform-origin:0 0;">SECTION</div>
<div class="a" style="left:1469px;top:139px;width:1px;height:72px;background:#3c3f44;"></div>
<svg style="left:1497px;top:116px;" width="44" height="44" viewBox="0 0 44 44" fill="none"><ellipse cx="28" cy="7" rx="9" ry="5" stroke="#d0343c" stroke-width="1.4" stroke-linejoin="round" stroke-linecap="round"/><ellipse cx="28" cy="7" rx="5" ry="2.5" stroke="#cfcfcf" stroke-width="1.3" stroke-linejoin="round" stroke-linecap="round"/><path d="M19 6 Q17 13 24 14 M37 6 Q39 12 33 14" stroke="#d0343c" stroke-width="1.4" stroke-linejoin="round" stroke-linecap="round"/><rect x="1" y="27" width="26" height="12" stroke="#cfcfcf" stroke-width="1.3" stroke-linejoin="round" stroke-linecap="round"/><rect x="8" y="31" width="4" height="4" fill="#ddd"/><rect x="15" y="31" width="4" height="4" fill="#ddd"/><path d="M33 16 Q40 16 40 23 Q40 27 37 30 V34 H30 V30 Q27 27 27 23 Q27 16 33 16Z" fill="#b88a2a" stroke="#e6b040" stroke-width="1.2" stroke-linejoin="round" stroke-linecap="round"/></svg>
<div class="t" style="left:1478.0px;top:165.2px;font-size:16.5px;color:#dcdcdc;transform:scaleX(0.9946);transform-origin:0 0;">Constraints</div>
<div class="t" style="left:1491.5px;top:182.0px;font-size:16.5px;color:#dcdcdc;transform:scaleX(1.0071);transform-origin:0 0;">Toolbar</div>
<svg style="left:1514px;top:204px;" width="8" height="5" viewBox="0 0 8 5" fill="none"><path d="M0 0 H8 L4 4.5Z" fill="#e8e8e8"/></svg>
<svg style="left:1568px;top:135px;" width="25" height="24" viewBox="0 0 25 24" fill="none"><ellipse cx="12.5" cy="12" rx="11.5" ry="10.5" stroke="#d0343c" stroke-width="2.4" stroke-linejoin="round" stroke-linecap="round"/><ellipse cx="12.5" cy="10" rx="6" ry="3.5" stroke="#ddd" stroke-width="1.4" stroke-linejoin="round" stroke-linecap="round"/><path d="M6.5 10 V13 Q12.5 17 18.5 13 V10" stroke="#ddd" stroke-width="1.4" stroke-linejoin="round" stroke-linecap="round"/></svg>
<div class="t" style="left:1598.0px;top:138.0px;font-size:16.5px;color:#dcdcdc;transform:scaleX(0.9636);transform-origin:0 0;">Concentric</div>
<svg style="left:1568px;top:167px;" width="25" height="24" viewBox="0 0 25 24" fill="none"><circle cx="5" cy="5" r="3.5" fill="#d0343c"/><circle cx="19" cy="19" r="3.5" fill="#d0343c"/><path d="M9 9 L15 15" stroke="#ddd" stroke-width="1.3" stroke-linejoin="round" stroke-linecap="round"/></svg>
<div class="t" style="left:1598.0px;top:170.3px;font-size:16.5px;color:#dcdcdc;transform:scaleX(0.9748);transform-origin:0 0;">Coincident</div>
<svg style="left:1685px;top:135px;" width="24" height="24" viewBox="0 0 24 24" fill="none"><path d="M2 6 L7 2 H11 V20 L6 23 H2Z" stroke="#d0343c" stroke-width="1.8" stroke-linejoin="round" stroke-linecap="round"/><path d="M12 6 L17 2 H22 V19 L17 23 H12Z M12 6 H17 V23 M17 6 L22 2" stroke="#e0e0e0" stroke-width="1.5" stroke-linejoin="round" stroke-linecap="round"/></svg>
<div class="t" style="left:1715.0px;top:138.0px;font-size:16.5px;color:#dcdcdc;transform:scaleX(0.9723);transform-origin:0 0;">Parallel</div>
<svg style="left:1689px;top:168px;" width="18" height="22" viewBox="0 0 18 22" fill="none"><path d="M4 9 V6 Q4 1.5 9 1.5 Q14 1.5 14 6 V9" stroke="#ccc" stroke-width="1.8" stroke-linejoin="round" stroke-linecap="round"/><rect x="1.5" y="9" width="15" height="11" fill="#3a3220" stroke="#e6b040" stroke-width="1.6" stroke-linejoin="round" stroke-linecap="round"/><path d="M2 13 H16 M2 16.5 H16" stroke="#e6b040" stroke-width="1.3" stroke-linejoin="round" stroke-linecap="round"/></svg>
<div class="t" style="left:1715.0px;top:170.3px;font-size:16.5px;color:#dcdcdc;transform:scaleX(0.9548);transform-origin:0 0;">Fix</div>
<div class="t" style="left:1564.5px;top:218.1px;font-size:12px;color:#b8babd;font-weight:bold;transform:scaleX(1.1827);transform-origin:0 0;">CONSTRAINTS</div>
<svg style="left:1676px;top:220px;" width="10" height="6" viewBox="0 0 10 6" fill="none"><path d="M1 1 L5 5 L9 1" stroke="#8a8d91" stroke-width="1.2"/></svg>
<div class="a" style="left:1781.6px;top:140px;width:1px;height:70px;background:#3c3f44;"></div>
<svg style="left:1793px;top:136px;" width="22" height="21" viewBox="0 0 22 21" fill="none"><rect x="1" y="7" width="13" height="13" stroke="#cfcfcf" stroke-width="1.3" stroke-linejoin="round" stroke-linecap="round"/><circle cx="13" cy="9" r="7.5" fill="#2e3034" stroke="#cfcfcf" stroke-width="1.3" stroke-linejoin="round" stroke-linecap="round"/><circle cx="12" cy="10" r="5" fill="#4a8ee0"/><path d="M9 12 L15 7 M10 14 L16 9" stroke="#2c2f33" stroke-width="1"/></svg>
<div class="a" style="left:1824px;top:131px;width:37px;height:31px;background:#3a3e44;border:1.5px solid #4a80c8"></div>
<svg style="left:1831px;top:136px;" width="22" height="22" viewBox="0 0 22 22" fill="none"><path d="M11 1.5 L20 6 V16 L11 20.5 L2 16 V6 Z M2 6 L11 10.5 L20 6 M11 10.5 V20.5" stroke="#d8d8d8" stroke-width="1.4" stroke-linejoin="round" stroke-linecap="round"/><path d="M11 10.5 V20.5 M11 10.5 L20 6" stroke="#4a8ee0" stroke-width="1.4" stroke-linejoin="round" stroke-linecap="round"/></svg>
<svg style="left:1869px;top:136px;" width="22" height="22" viewBox="0 0 22 22" fill="none"><path d="M11 1.5 L20 6 V16 L11 20.5 L2 16 V6 Z M2 6 L11 10.5 L20 6 M11 10.5 V20.5" stroke="#d8d8d8" stroke-width="1.4" stroke-linejoin="round" stroke-linecap="round"/></svg>
<svg style="left:1907px;top:136px;" width="22" height="22" viewBox="0 0 22 22" fill="none"><path d="M11 1.5 L20 6 V16 L11 20.5 L2 16 V6 Z M2 6 L11 10.5 L20 6 M11 10.5 V20.5" stroke="#d8d8d8" stroke-width="1.4" stroke-linejoin="round" stroke-linecap="round"/><circle cx="11" cy="10.5" r="2.5" fill="#4a8ee0"/></svg>
<svg style="left:1791px;top:168px;" width="24" height="22" viewBox="0 0 24 22" fill="none"><rect x="1" y="1" width="6" height="6" stroke="#4a8ee0" stroke-width="1.3"/><rect x="3" y="3" width="2" height="2" fill="#4a8ee0"/><rect x="13" y="1" width="6" height="6" stroke="#4a8ee0" stroke-width="1.3"/><rect x="15" y="3" width="2" height="2" fill="#4a8ee0"/><rect x="1" y="14" width="6" height="6" stroke="#4a8ee0" stroke-width="1.3"/><rect x="3" y="16" width="2" height="2" fill="#4a8ee0"/><path d="M17 9 Q22 9 22 14 Q22 17 19.5 19 V21 H14.5 V19 Q12 17 12 14 Q12 9 17 9Z" fill="#e6b040"/></svg>
<svg style="left:1829px;top:168px;" width="24" height="22" viewBox="0 0 24 22" fill="none"><rect x="1" y="1" width="6" height="6" stroke="#bbb" stroke-width="1.3"/><rect x="3" y="3" width="2" height="2" fill="none"/><rect x="13" y="1" width="6" height="6" stroke="#4a8ee0" stroke-width="1.3"/><rect x="15" y="3" width="2" height="2" fill="#4a8ee0"/><rect x="1" y="14" width="6" height="6" stroke="#4a8ee0" stroke-width="1.3"/><rect x="3" y="16" width="2" height="2" fill="#4a8ee0"/><path d="M17 9 Q22 9 22 14 Q22 17 19.5 19 V21 H14.5 V19 Q12 17 12 14 Q12 9 17 9Z" fill="#c8c8c8"/></svg>
<svg style="left:1867px;top:168px;" width="24" height="22" viewBox="0 0 24 22" fill="none"><rect x="1" y="1" width="6" height="6" stroke="#4a8ee0" stroke-width="1.3"/><rect x="3" y="3" width="2" height="2" fill="#4a8ee0"/><rect x="13" y="1" width="6" height="6" stroke="#bbb" stroke-width="1.3"/><rect x="15" y="3" width="2" height="2" fill="none"/><rect x="1" y="14" width="6" height="6" stroke="#bbb" stroke-width="1.3"/><rect x="3" y="16" width="2" height="2" fill="none"/><path d="M8 6 L10 19 L13 15 L17 20 L19 18 L15 14 L19 12Z" fill="#2e3034" stroke="#eee" stroke-width="1.2" stroke-linejoin="round" stroke-linecap="round"/></svg>
<div class="t" style="left:1823.0px;top:218.1px;font-size:12px;color:#b8babd;font-weight:bold;transform:scaleX(1.1525);transform-origin:0 0;">CONTROLS</div>
<div class="a" style="left:1942px;top:139px;width:1px;height:72px;background:#3c3f44;"></div>
<svg style="left:1959px;top:118px;" width="42" height="42" viewBox="0 0 42 42" fill="none"><path d="M1 12 L12 1 H40 V30 L29 41 H1Z M1 12 H29 L40 1 M29 12 V41" stroke="#bbb" stroke-width="1.2" stroke-linejoin="round" stroke-linecap="round"/><path d="M18 12 V30 H29" stroke="#bbb" stroke-width="1.2" stroke-linejoin="round" stroke-linecap="round"/><path d="M23 24 V16 M20 19 L23 16 L26 19" stroke="#ddd" stroke-width="1.4" stroke-linejoin="round" stroke-linecap="round"/><path d="M1 41 L12 30 H28" stroke="#4a8ee0" stroke-width="1.6" stroke-linejoin="round" stroke-linecap="round"/><circle cx="1" cy="41" r="2" fill="#4a8ee0"/><circle cx="12" cy="30" r="2" fill="#4a8ee0"/><path d="M28 40 L39 29 L42 32 L31 43Z" fill="#e6b040"/></svg>
<div class="t" style="left:1953.0px;top:165.0px;font-size:16.5px;color:#dcdcdc;transform:scaleX(0.9516);transform-origin:0 0;">Sketch</div>
<div class="t" style="left:1951.0px;top:182.0px;font-size:16.5px;color:#dcdcdc;transform:scaleX(0.9496);transform-origin:0 0;">Feature</div>
<div class="t" style="left:1956.5px;top:218.1px;font-size:12px;color:#b8babd;font-weight:bold;transform:scaleX(1.4743);transform-origin:0 0;">MO</div>
<div class="a" style="left:0px;top:269px;width:49px;height:1045px;background:#1b1c1e;"></div>
<div class="a" style="left:0px;top:336px;width:49px;height:64px;background:#2c3033;"></div>
<svg style="left:5px;top:287px;" width="26" height="33" viewBox="0 0 26 33" fill="none"><path d="M13 1.5 Q24 1.5 24 12 Q24 18 18.5 23 V26 H7.5 V23 Q2 18 2 12 Q2 1.5 13 1.5Z" stroke="#ddd" stroke-width="1.6" stroke-linejoin="round" stroke-linecap="round"/><path d="M8 28 H18 M9 30.5 H17" stroke="#ddd" stroke-width="1.4" stroke-linejoin="round" stroke-linecap="round"/></svg>
<svg style="left:4px;top:352px;" width="30" height="32" viewBox="0 0 30 32" fill="none"><g transform="translate(0 0) scale(1.05)"><path d="M1 9 L14 3 L27 9 V22 L14 29 L1 22 Z M1 9 L14 15.5 L27 9 M14 15.5 V29" stroke="#ddd" stroke-width="1.5" stroke-linejoin="round" stroke-linecap="round"/><ellipse cx="14" cy="4" rx="5" ry="2.5" stroke="#ddd" stroke-width="1.5" stroke-linejoin="round" stroke-linecap="round"/><path d="M9 4 V8 Q14 11 19 8 V4" stroke="#ddd" stroke-width="1.5" stroke-linejoin="round" stroke-linecap="round"/></g></svg>
<svg style="left:-1px;top:415px;" width="40" height="32" viewBox="0 0 40 32" fill="none"><text x="4" y="24" font-family="Liberation Serif" font-style="italic" font-size="27" fill="#e4e4e4">f</text><text x="16" y="24" font-family="Liberation Serif" font-size="20" fill="#e4e4e4">(</text><text x="21.5" y="23" font-family="Liberation Serif" font-style="italic" font-size="19" fill="#e4e4e4">x</text><text x="31" y="24" font-family="Liberation Serif" font-size="20" fill="#e4e4e4">)</text></svg>
<svg style="left:2px;top:484px;" width="33" height="34" viewBox="0 0 33 34" fill="none"><rect x="1" y="1" width="17" height="8" stroke="#ddd" stroke-width="1.4" stroke-linejoin="round" stroke-linecap="round"/><path d="M7 5 H12" stroke="#ddd" stroke-width="1.4" stroke-linejoin="round" stroke-linecap="round"/><path d="M9 9 V29 H14 M9 17 H14" stroke="#ddd" stroke-width="1.4" stroke-linejoin="round" stroke-linecap="round"/><rect x="14" y="13" width="18" height="8" stroke="#ddd" stroke-width="1.4" stroke-linejoin="round" stroke-linecap="round"/><rect x="14" y="25" width="18" height="8" stroke="#ddd" stroke-width="1.4" stroke-linejoin="round" stroke-linecap="round"/></svg>
<svg style="left:244px;top:262px;" width="21" height="3" viewBox="0 0 21 3" fill="none"><rect x="0.0" y="0" width="3" height="3" fill="#ddd"/><rect x="4.5" y="0" width="3" height="3" fill="#ddd"/><rect x="9.0" y="0" width="3" height="3" fill="#ddd"/><rect x="13.5" y="0" width="3" height="3" fill="#ddd"/><rect x="18.0" y="0" width="3" height="3" fill="#ddd"/></svg>
<div class="t" style="left:70.6px;top:299.0px;font-size:16.5px;color:#dedede;transform:scaleX(1.0413);transform-origin:0 0;">Mechanical Browser</div>
<svg style="left:443px;top:297px;" width="18" height="19" viewBox="0 0 18 19" fill="none"><circle cx="11" cy="7" r="6" stroke="#bbb" stroke-width="1.5" stroke-linejoin="round" stroke-linecap="round"/><path d="M6.5 11.5 L1 18" stroke="#bbb" stroke-width="1.5" stroke-linejoin="round" stroke-linecap="round"/></svg>
<svg style="left:484px;top:298px;" width="5" height="17" viewBox="0 0 5 17" fill="none"><circle cx="2.5" cy="2" r="2" fill="#ddd"/><circle cx="2.5" cy="8.5" r="2" fill="#ddd"/><circle cx="2.5" cy="15" r="2" fill="#ddd"/></svg>
<svg style="left:70px;top:337px;" width="22" height="22" viewBox="0 0 22 22" fill="none"><path d="M1 1 H7 L8 2.5 H12 V6 M1 1 V6 H12 M1 4 H12" stroke="#bbb" stroke-width="1.2" stroke-linejoin="round" stroke-linecap="round"/><path d="M3 6 V19 H9 M3 13 H9" stroke="#bbb" stroke-width="1.2" stroke-linejoin="round" stroke-linecap="round"/><rect x="9" y="13" width="12" height="8" stroke="#bbb" stroke-width="1.2" stroke-linejoin="round" stroke-linecap="round"/><rect x="12" y="15.5" width="6" height="3" stroke="#bbb" stroke-width="1.2" stroke-linejoin="round" stroke-linecap="round"/></svg>
<svg style="left:104px;top:337px;" width="24" height="22" viewBox="0 0 24 22" fill="none"><rect x="1" y="1" width="7" height="6" stroke="#bbb" stroke-width="1.2" stroke-linejoin="round" stroke-linecap="round"/><path d="M3 7 V16 H8" stroke="#bbb" stroke-width="1.2" stroke-linejoin="round" stroke-linecap="round"/><rect x="8" y="12" width="12" height="8" rx="2" fill="#c0202a"/></svg>
<svg style="left:444px;top:338px;" width="16" height="22" viewBox="0 0 16 22" fill="none"><rect x="1" y="1" width="4.5" height="4.5" stroke="#ccc" stroke-width="1.2" stroke-linejoin="round" stroke-linecap="round"/><rect x="1" y="15" width="4.5" height="4.5" stroke="#ccc" stroke-width="1.2" stroke-linejoin="round" stroke-linecap="round"/><path d="M3 8 V13 M1.5 11.5 L3 13 L4.5 11.5" stroke="#ccc" stroke-width="1" stroke-linejoin="round" stroke-linecap="round"/><text x="8" y="6.5" font-size="8" font-weight="bold" fill="#ccc" font-family="Liberation Sans">A</text><text x="8" y="20.5" font-size="8" font-weight="bold" fill="#ccc" font-family="Liberation Sans">Z</text></svg>
<svg style="left:477px;top:339px;" width="19" height="19" viewBox="0 0 19 19" fill="none"><rect x="1" y="1" width="17" height="17" rx="1.5" fill="#2c3033" stroke="#9a9a9a" stroke-width="2"/><path d="M17 2.5 V17 H2.5 Z" fill="#d4d4d4"/></svg>
<div class="a" style="left:51px;top:378.5px;width:472px;height:1.5px;background:#383b3f;"></div>
<svg style="left:56px;top:403px;" width="14" height="8" viewBox="0 0 14 8" fill="none"><path d="M1 1 L7 7 L13 1" stroke="#bbb" stroke-width="1.3" stroke-linejoin="round" stroke-linecap="round"/></svg>
<svg style="left:78px;top:394px;" width="24" height="22" viewBox="0 0 24 22" fill="none"><g transform="translate(0 5) scale(0.62)"><path d="M1 9 L14 3 L27 9 V22 L14 29 L1 22 Z M1 9 L14 15.5 L27 9 M14 15.5 V29" stroke="#ccc" stroke-width="1.3" stroke-linejoin="round" stroke-linecap="round"/><ellipse cx="14" cy="4" rx="5" ry="2.5" stroke="#ccc" stroke-width="1.3" stroke-linejoin="round" stroke-linecap="round"/><path d="M9 4 V8 Q14 11 19 8 V4" stroke="#ccc" stroke-width="1.3" stroke-linejoin="round" stroke-linecap="round"/></g><g transform="translate(8 0) scale(0.62)"><path d="M1 9 L14 3 L27 9 V22 L14 29 L1 22 Z M1 9 L14 15.5 L27 9 M14 15.5 V29" stroke="#4a8ee0" stroke-width="1.3" stroke-linejoin="round" stroke-linecap="round"/><ellipse cx="14" cy="4" rx="5" ry="2.5" stroke="#4a8ee0" stroke-width="1.3" stroke-linejoin="round" stroke-linecap="round"/><path d="M9 4 V8 Q14 11 19 8 V4" stroke="#4a8ee0" stroke-width="1.3" stroke-linejoin="round" stroke-linecap="round"/></g><ellipse cx="16.7" cy="2.5" rx="3" ry="1.6" fill="#4a8ee0"/></svg>
<div class="t" style="left:105.3px;top:402.1px;font-size:13.7px;color:#e2e2e2;transform:scaleX(0.9773);transform-origin:0 0;">1055_450REFINC</div>
<svg style="left:103px;top:420.7px;" width="20" height="21" viewBox="0 0 20 21" fill="none"><g transform="translate(0.5 0.5) scale(0.66)"><path d="M1 9 L14 3 L27 9 V22 L14 29 L1 22 Z M1 9 L14 15.5 L27 9 M14 15.5 V29" stroke="#d0d0d0" stroke-width="1.3" stroke-linejoin="round" stroke-linecap="round"/><ellipse cx="14" cy="4" rx="5" ry="2.5" stroke="#d0d0d0" stroke-width="1.3" stroke-linejoin="round" stroke-linecap="round"/><path d="M9 4 V8 Q14 11 19 8 V4" stroke="#d0d0d0" stroke-width="1.3" stroke-linejoin="round" stroke-linecap="round"/></g></svg>
<div class="t" style="left:128.8px;top:428.3px;font-size:14px;color:#e2e2e2;transform:scaleX(0.975);transform-origin:0 0">1055.450(2)_P1-1</div>
<svg style="left:103px;top:447.02px;" width="20" height="21" viewBox="0 0 20 21" fill="none"><g transform="translate(0.5 0.5) scale(0.66)"><path d="M1 9 L14 3 L27 9 V22 L14 29 L1 22 Z M1 9 L14 15.5 L27 9 M14 15.5 V29" stroke="#d0d0d0" stroke-width="1.3" stroke-linejoin="round" stroke-linecap="round"/><ellipse cx="14" cy="4" rx="5" ry="2.5" stroke="#d0d0d0" stroke-width="1.3" stroke-linejoin="round" stroke-linecap="round"/><path d="M9 4 V8 Q14 11 19 8 V4" stroke="#d0d0d0" stroke-width="1.3" stroke-linejoin="round" stroke-linecap="round"/></g></svg>
<div class="t" style="left:128.8px;top:454.7px;font-size:14px;color:#e2e2e2;transform:scaleX(0.975);transform-origin:0 0">1XXX_01_04(B,2)_P7-1</div>
<svg style="left:103px;top:473.34px;" width="20" height="21" viewBox="0 0 20 21" fill="none"><g transform="translate(0.5 0.5) scale(0.66)"><path d="M1 9 L14 3 L27 9 V22 L14 29 L1 22 Z M1 9 L14 15.5 L27 9 M14 15.5 V29" stroke="#d0d0d0" stroke-width="1.3" stroke-linejoin="round" stroke-linecap="round"/><ellipse cx="14" cy="4" rx="5" ry="2.5" stroke="#d0d0d0" stroke-width="1.3" stroke-linejoin="round" stroke-linecap="round"/><path d="M9 4 V8 Q14 11 19 8 V4" stroke="#d0d0d0" stroke-width="1.3" stroke-linejoin="round" stroke-linecap="round"/></g></svg>
<div class="t" style="left:128.8px;top:481.0px;font-size:14px;color:#e2e2e2;transform:scaleX(0.975);transform-origin:0 0">1XXX_01_04(T,2)_P7-1</div>
<svg style="left:103px;top:499.65999999999997px;" width="20" height="21" viewBox="0 0 20 21" fill="none"><g transform="translate(0.5 0.5) scale(0.66)"><path d="M1 9 L14 3 L27 9 V22 L14 29 L1 22 Z M1 9 L14 15.5 L27 9 M14 15.5 V29" stroke="#d0d0d0" stroke-width="1.3" stroke-linejoin="round" stroke-linecap="round"/><ellipse cx="14" cy="4" rx="5" ry="2.5" stroke="#d0d0d0" stroke-width="1.3" stroke-linejoin="round" stroke-linecap="round"/><path d="M9 4 V8 Q14 11 19 8 V4" stroke="#d0d0d0" stroke-width="1.3" stroke-linejoin="round" stroke-linecap="round"/></g></svg>
<div class="t" style="left:128.8px;top:507.3px;font-size:14px;color:#e2e2e2;transform:scaleX(0.975);transform-origin:0 0">186X_01_01(2)_P2-1</div>
<svg style="left:103px;top:525.98px;" width="20" height="21" viewBox="0 0 20 21" fill="none"><g transform="translate(0.5 0.5) scale(0.66)"><path d="M1 9 L14 3 L27 9 V22 L14 29 L1 22 Z M1 9 L14 15.5 L27 9 M14 15.5 V29" stroke="#d0d0d0" stroke-width="1.3" stroke-linejoin="round" stroke-linecap="round"/><ellipse cx="14" cy="4" rx="5" ry="2.5" stroke="#d0d0d0" stroke-width="1.3" stroke-linejoin="round" stroke-linecap="round"/><path d="M9 4 V8 Q14 11 19 8 V4" stroke="#d0d0d0" stroke-width="1.3" stroke-linejoin="round" stroke-linecap="round"/></g></svg>
<div class="t" style="left:128.8px;top:533.6px;font-size:14px;color:#e2e2e2;transform:scaleX(0.975);transform-origin:0 0">1XXX_01_05(2)_P8-1</div>
<svg style="left:103px;top:552.3px;" width="20" height="21" viewBox="0 0 20 21" fill="none"><g transform="translate(0.5 0.5) scale(0.66)"><path d="M1 9 L14 3 L27 9 V22 L14 29 L1 22 Z M1 9 L14 15.5 L27 9 M14 15.5 V29" stroke="#d0d0d0" stroke-width="1.3" stroke-linejoin="round" stroke-linecap="round"/><ellipse cx="14" cy="4" rx="5" ry="2.5" stroke="#d0d0d0" stroke-width="1.3" stroke-linejoin="round" stroke-linecap="round"/><path d="M9 4 V8 Q14 11 19 8 V4" stroke="#d0d0d0" stroke-width="1.3" stroke-linejoin="round" stroke-linecap="round"/></g></svg>
<div class="t" style="left:128.8px;top:559.9px;font-size:14px;color:#e2e2e2;transform:scaleX(0.975);transform-origin:0 0">1XXX_01_05(2)_P8-2</div>
<svg style="left:103px;top:578.62px;" width="20" height="21" viewBox="0 0 20 21" fill="none"><g transform="translate(0.5 0.5) scale(0.66)"><path d="M1 9 L14 3 L27 9 V22 L14 29 L1 22 Z M1 9 L14 15.5 L27 9 M14 15.5 V29" stroke="#d0d0d0" stroke-width="1.3" stroke-linejoin="round" stroke-linecap="round"/><ellipse cx="14" cy="4" rx="5" ry="2.5" stroke="#d0d0d0" stroke-width="1.3" stroke-linejoin="round" stroke-linecap="round"/><path d="M9 4 V8 Q14 11 19 8 V4" stroke="#d0d0d0" stroke-width="1.3" stroke-linejoin="round" stroke-linecap="round"/></g></svg>
<div class="t" style="left:128.8px;top:586.3px;font-size:14px;color:#e2e2e2;transform:scaleX(0.975);transform-origin:0 0">1XX3_04_00_3(2)_P5-1</div>
<svg style="left:103px;top:604.94px;" width="20" height="21" viewBox="0 0 20 21" fill="none"><g transform="translate(0.5 0.5) scale(0.66)"><path d="M1 9 L14 3 L27 9 V22 L14 29 L1 22 Z M1 9 L14 15.5 L27 9 M14 15.5 V29" stroke="#d0d0d0" stroke-width="1.3" stroke-linejoin="round" stroke-linecap="round"/><ellipse cx="14" cy="4" rx="5" ry="2.5" stroke="#d0d0d0" stroke-width="1.3" stroke-linejoin="round" stroke-linecap="round"/><path d="M9 4 V8 Q14 11 19 8 V4" stroke="#d0d0d0" stroke-width="1.3" stroke-linejoin="round" stroke-linecap="round"/></g></svg>
<div class="t" style="left:128.8px;top:612.6px;font-size:14px;color:#e2e2e2;transform:scaleX(0.975);transform-origin:0 0">1XX3_04_00_3(2)_P5-2</div>
<svg style="left:103px;top:631.26px;" width="20" height="21" viewBox="0 0 20 21" fill="none"><g transform="translate(0.5 0.5) scale(0.66)"><path d="M1 9 L14 3 L27 9 V22 L14 29 L1 22 Z M1 9 L14 15.5 L27 9 M14 15.5 V29" stroke="#d0d0d0" stroke-width="1.3" stroke-linejoin="round" stroke-linecap="round"/><ellipse cx="14" cy="4" rx="5" ry="2.5" stroke="#d0d0d0" stroke-width="1.3" stroke-linejoin="round" stroke-linecap="round"/><path d="M9 4 V8 Q14 11 19 8 V4" stroke="#d0d0d0" stroke-width="1.3" stroke-linejoin="round" stroke-linecap="round"/></g></svg>
<div class="t" style="left:128.8px;top:638.9px;font-size:14px;color:#e2e2e2;transform:scaleX(0.975);transform-origin:0 0">186X_02_00_P6_-1</div>
<svg style="left:103px;top:657.5799999999999px;" width="20" height="21" viewBox="0 0 20 21" fill="none"><g transform="translate(0.5 0.5) scale(0.66)"><path d="M1 9 L14 3 L27 9 V22 L14 29 L1 22 Z M1 9 L14 15.5 L27 9 M14 15.5 V29" stroke="#d0d0d0" stroke-width="1.3" stroke-linejoin="round" stroke-linecap="round"/><ellipse cx="14" cy="4" rx="5" ry="2.5" stroke="#d0d0d0" stroke-width="1.3" stroke-linejoin="round" stroke-linecap="round"/><path d="M9 4 V8 Q14 11 19 8 V4" stroke="#d0d0d0" stroke-width="1.3" stroke-linejoin="round" stroke-linecap="round"/></g></svg>
<div class="t" style="left:128.8px;top:665.2px;font-size:14px;color:#e2e2e2;transform:scaleX(0.975);transform-origin:0 0">0000-00168553-1</div>
<svg style="left:103px;top:683.9px;" width="20" height="21" viewBox="0 0 20 21" fill="none"><g transform="translate(0.5 0.5) scale(0.66)"><path d="M1 9 L14 3 L27 9 V22 L14 29 L1 22 Z M1 9 L14 15.5 L27 9 M14 15.5 V29" stroke="#d0d0d0" stroke-width="1.3" stroke-linejoin="round" stroke-linecap="round"/><ellipse cx="14" cy="4" rx="5" ry="2.5" stroke="#d0d0d0" stroke-width="1.3" stroke-linejoin="round" stroke-linecap="round"/><path d="M9 4 V8 Q14 11 19 8 V4" stroke="#d0d0d0" stroke-width="1.3" stroke-linejoin="round" stroke-linecap="round"/></g></svg>
<div class="t" style="left:128.8px;top:691.5px;font-size:14px;color:#e2e2e2;transform:scaleX(0.975);transform-origin:0 0">0000-00168553-2</div>
<svg style="left:103px;top:710.22px;" width="20" height="21" viewBox="0 0 20 21" fill="none"><g transform="translate(0.5 0.5) scale(0.66)"><path d="M1 9 L14 3 L27 9 V22 L14 29 L1 22 Z M1 9 L14 15.5 L27 9 M14 15.5 V29" stroke="#d0d0d0" stroke-width="1.3" stroke-linejoin="round" stroke-linecap="round"/><ellipse cx="14" cy="4" rx="5" ry="2.5" stroke="#d0d0d0" stroke-width="1.3" stroke-linejoin="round" stroke-linecap="round"/><path d="M9 4 V8 Q14 11 19 8 V4" stroke="#d0d0d0" stroke-width="1.3" stroke-linejoin="round" stroke-linecap="round"/></g></svg>
<div class="t" style="left:128.8px;top:717.9px;font-size:14px;color:#e2e2e2;transform:scaleX(0.975);transform-origin:0 0">0000-00168553-3</div>
<svg style="left:103px;top:736.54px;" width="20" height="21" viewBox="0 0 20 21" fill="none"><g transform="translate(0.5 0.5) scale(0.66)"><path d="M1 9 L14 3 L27 9 V22 L14 29 L1 22 Z M1 9 L14 15.5 L27 9 M14 15.5 V29" stroke="#d0d0d0" stroke-width="1.3" stroke-linejoin="round" stroke-linecap="round"/><ellipse cx="14" cy="4" rx="5" ry="2.5" stroke="#d0d0d0" stroke-width="1.3" stroke-linejoin="round" stroke-linecap="round"/><path d="M9 4 V8 Q14 11 19 8 V4" stroke="#d0d0d0" stroke-width="1.3" stroke-linejoin="round" stroke-linecap="round"/></g></svg>
<div class="t" style="left:128.8px;top:744.2px;font-size:14px;color:#e2e2e2;transform:scaleX(0.975);transform-origin:0 0">0000-00168553-4</div>
<svg style="left:103px;top:762.86px;" width="20" height="21" viewBox="0 0 20 21" fill="none"><g transform="translate(0.5 0.5) scale(0.66)"><path d="M1 9 L14 3 L27 9 V22 L14 29 L1 22 Z M1 9 L14 15.5 L27 9 M14 15.5 V29" stroke="#d0d0d0" stroke-width="1.3" stroke-linejoin="round" stroke-linecap="round"/><ellipse cx="14" cy="4" rx="5" ry="2.5" stroke="#d0d0d0" stroke-width="1.3" stroke-linejoin="round" stroke-linecap="round"/><path d="M9 4 V8 Q14 11 19 8 V4" stroke="#d0d0d0" stroke-width="1.3" stroke-linejoin="round" stroke-linecap="round"/></g></svg>
<div class="t" style="left:128.8px;top:770.5px;font-size:14px;color:#e2e2e2;transform:scaleX(0.975);transform-origin:0 0">0000-00168553-5</div>
<svg style="left:103px;top:789.1800000000001px;" width="20" height="21" viewBox="0 0 20 21" fill="none"><g transform="translate(0.5 0.5) scale(0.66)"><path d="M1 9 L14 3 L27 9 V22 L14 29 L1 22 Z M1 9 L14 15.5 L27 9 M14 15.5 V29" stroke="#d0d0d0" stroke-width="1.3" stroke-linejoin="round" stroke-linecap="round"/><ellipse cx="14" cy="4" rx="5" ry="2.5" stroke="#d0d0d0" stroke-width="1.3" stroke-linejoin="round" stroke-linecap="round"/><path d="M9 4 V8 Q14 11 19 8 V4" stroke="#d0d0d0" stroke-width="1.3" stroke-linejoin="round" stroke-linecap="round"/></g></svg>
<div class="t" style="left:128.8px;top:796.8px;font-size:14px;color:#e2e2e2;transform:scaleX(0.975);transform-origin:0 0">0000-00168553-6</div>
<svg style="left:103px;top:815.5px;" width="20" height="21" viewBox="0 0 20 21" fill="none"><g transform="translate(0.5 0.5) scale(0.66)"><path d="M1 9 L14 3 L27 9 V22 L14 29 L1 22 Z M1 9 L14 15.5 L27 9 M14 15.5 V29" stroke="#d0d0d0" stroke-width="1.3" stroke-linejoin="round" stroke-linecap="round"/><ellipse cx="14" cy="4" rx="5" ry="2.5" stroke="#d0d0d0" stroke-width="1.3" stroke-linejoin="round" stroke-linecap="round"/><path d="M9 4 V8 Q14 11 19 8 V4" stroke="#d0d0d0" stroke-width="1.3" stroke-linejoin="round" stroke-linecap="round"/></g></svg>
<div class="t" style="left:128.8px;top:823.1px;font-size:14px;color:#e2e2e2;transform:scaleX(0.975);transform-origin:0 0">0000-00168553-7</div>
<div class="a" style="left:52px;top:990px;width:470px;height:2px;background:#3a3d41;"></div>
<div class="a" style="left:50px;top:996px;width:465px;height:28px;background:#3d4044;"></div>
<div class="a" style="left:515px;top:996px;width:6px;height:318px;background:#64676b;"></div>
<svg style="left:55px;top:1007px;" width="14" height="8" viewBox="0 0 14 8" fill="none"><path d="M1 1 L7 7 L13 1" stroke="#bbb" stroke-width="1.3" stroke-linejoin="round" stroke-linecap="round"/></svg>
<div class="t" style="left:86.4px;top:1003.8px;font-size:15px;color:#e0e0e0;">Mechanical block</div>
<div class="t" style="left:72.6px;top:1033.3px;font-size:15px;color:#e0e0e0;">Type</div>
<div class="t" style="left:252.0px;top:1033.3px;font-size:15px;color:#7e7e7e;">Mechanical block</div>
<div class="t" style="left:72.6px;top:1063.7px;font-size:15px;color:#e0e0e0;">Name</div>
<div class="t" style="left:252.0px;top:1063.7px;font-size:15px;color:#727272;">1055_450REFINC</div>
<div class="t" style="left:72.6px;top:1094.1px;font-size:15px;color:#e0e0e0;">Description</div>
<div class="a" style="left:252px;top:1091.76px;width:263px;height:20px;overflow:hidden"><div class="t" style="left:0.0px;top:2.3px;font-size:15px;color:#e0e0e0;">Imported from C:\Users\PCAL\OneDrive</div></div>
<div class="t" style="left:72.6px;top:1124.4px;font-size:15px;color:#e0e0e0;">File</div>
<div class="t" style="left:72.6px;top:1154.8px;font-size:15px;color:#e0e0e0;">Extension type</div>
<svg style="left:509px;top:1158.52px;" width="6" height="5" viewBox="0 0 6 5" fill="none"><path d="M0 0 L3 3 L6 0" stroke="#999" stroke-width="1" stroke-linejoin="round" stroke-linecap="round"/></svg>
<div class="t" style="left:72.6px;top:1185.2px;font-size:15px;color:#e0e0e0;">Sectionable</div>
<div class="t" style="left:252.0px;top:1185.2px;font-size:15px;color:#e0e0e0;">Yes</div>
<svg style="left:509px;top:1188.9px;" width="6" height="5" viewBox="0 0 6 5" fill="none"><path d="M0 0 L3 3 L6 0" stroke="#999" stroke-width="1" stroke-linejoin="round" stroke-linecap="round"/></svg>
<div class="t" style="left:72.6px;top:1215.6px;font-size:15px;color:#e0e0e0;">Standard part</div>
<div class="t" style="left:252.0px;top:1215.6px;font-size:15px;color:#e0e0e0;">No</div>
<svg style="left:509px;top:1219.28px;" width="6" height="5" viewBox="0 0 6 5" fill="none"><path d="M0 0 L3 3 L6 0" stroke="#999" stroke-width="1" stroke-linejoin="round" stroke-linecap="round"/></svg>
<div class="t" style="left:72.6px;top:1246.0px;font-size:15px;color:#e0e0e0;">BOM status</div>
<div class="t" style="left:252.0px;top:1246.0px;font-size:15px;color:#e0e0e0;">Regular</div>
<svg style="left:509px;top:1249.66px;" width="6" height="5" viewBox="0 0 6 5" fill="none"><path d="M0 0 L3 3 L6 0" stroke="#999" stroke-width="1" stroke-linejoin="round" stroke-linecap="round"/></svg>
<div class="t" style="left:72.6px;top:1276.3px;font-size:15px;color:#e0e0e0;">Material</div>
<div class="t" style="left:257.6px;top:1276.3px;font-size:15px;color:#e0e0e0;">&lt;Inherit&gt;</div>
<svg style="left:457px;top:1280px;" width="18" height="5" viewBox="0 0 18 5" fill="none"><circle cx="2.5" cy="2.5" r="2.2" fill="#ddd"/><circle cx="9" cy="2.5" r="2.2" fill="#ddd"/><circle cx="15.5" cy="2.5" r="2.2" fill="#ddd"/></svg>
<svg style="left:496px;top:1274px;" width="17" height="19" viewBox="0 0 17 19" fill="none"><path d="M8.5 1 V9 M2 9 H15 V13 H2Z M2 13 V18 M5.5 13 V18 M9 13 V18 M12.5 13 V18 M15 13 V18" stroke="#ccc" stroke-width="1.2" stroke-linejoin="round" stroke-linecap="round"/></svg>
<svg style="left:60px;top:1305px;" width="6" height="10" viewBox="0 0 6 10" fill="none"><path d="M1 1 L5 5 L1 9" stroke="#bbb" stroke-width="1.2" stroke-linejoin="round" stroke-linecap="round"/></svg>
<div class="t" style="left:72.6px;top:1307.3px;font-size:15px;color:#e0e0e0;">Custom properties</div>
<svg style="left:490px;top:1309px;" width="20" height="5" viewBox="0 0 20 5" fill="none"><circle cx="2.5" cy="2.5" r="2.2" fill="#ddd"/><circle cx="9" cy="2.5" r="2.2" fill="#ddd"/><circle cx="15.5" cy="2.5" r="2.2" fill="#ddd"/></svg>
<div class="a" style="left:0px;top:244px;width:2508px;height:11px;background:#181b1e;"></div>
<div class="a" style="left:527px;top:259px;width:88.5px;height:22px;background:#1c1e21;"></div>
<div class="a" style="left:615.5px;top:259px;width:196px;height:22px;background:#2a2d30;"></div>
<div class="a" style="left:811.5px;top:259px;width:34px;height:22px;background:#1c1e21;"></div>
<div class="t" style="left:543.0px;top:261.7px;font-size:15px;color:#d8d8d8;transform:scaleX(0.8839);transform-origin:0 0;">Start</div>
<svg style="left:596px;top:264px;" width="12" height="12" viewBox="0 0 12 12" fill="none"><path d="M1 1 L11 11 M11 1 L1 11" stroke="#d0d0d0" stroke-width="2.1"/></svg>
<div class="t" style="left:633.3px;top:261.7px;font-size:15px;color:#f4f4f4;font-weight:bold;transform:scaleX(1.0669);transform-origin:0 0;">1055_450REFINC*</div>
<svg style="left:790.6px;top:264px;" width="12" height="12" viewBox="0 0 12 12" fill="none"><path d="M1 1 L11 11 M11 1 L1 11" stroke="#d0d0d0" stroke-width="2.1"/></svg>
<svg style="left:826px;top:264px;" width="12" height="12" viewBox="0 0 12 12" fill="none"><path d="M6 0.5 V11.5 M0.5 6 H11.5" stroke="#ddd" stroke-width="1.6"/></svg>
<div class="a" style="left:525px;top:281px;width:1484px;height:1033px;background:linear-gradient(180deg,#787878 0%,#767676 53%,#727272 57%,#696969 67%,#5c5c5c 76%,#535353 84%,#4a4a4a 100%);"></div>
<div class="a" style="left:525px;top:281px;width:2px;height:1033px;background:#8a8a8a;opacity:0.5"></div>
<svg style="left:0;top:0" width="2508" height="1314" viewBox="0 0 2508 1314"><defs><clipPath id="vp"><rect x="525" y="281" width="1484" height="1033"/></clipPath></defs><g clip-path="url(#vp)"><polygon points="1489.7,796.7 1713.8,668.9 1713.8,1231 1489.7,1360" fill="#606060" stroke="#3a3a3a" stroke-width="1.3" stroke-linejoin="round"/><polygon points="1469,808 1489.7,796.7 1489.7,1360 1469,1368" fill="#686868" stroke="#3a3a3a" stroke-width="1.3" stroke-linejoin="round"/><polygon points="1483.7,800 1489.7,796.7 1489.7,1360 1483.7,1364" fill="#9a9a9a"/><polygon points="826.6,439 1469,808 1469,1368 826.6,994" fill="#8f8f8f" stroke="#3a3a3a" stroke-width="1.3" stroke-linejoin="round"/><polygon points="1067.1,295.2 1713.8,668.9 1489.7,796.7 842.6,425.4" fill="#a3a3a3" stroke="#3a3a3a" stroke-width="1.3" stroke-linejoin="round"/><polygon points="842.6,425.4 1489.7,796.7 1489.7,800.5 842.6,430" fill="#8a8a8a" stroke="#3a3a3a" stroke-width="1.3" stroke-linejoin="round"/><polygon points="826.6,439 841,431 1484,800.5 1469,808" fill="#a0a0a0" stroke="#3a3a3a" stroke-width="1.3" stroke-linejoin="round"/><line x1="833" y1="444" x2="1469" y2="810" stroke="#777" stroke-width="1"/><ellipse cx="1009.7" cy="375.5" rx="11.8" ry="6.5" fill="#8a8a8a" stroke="#3a3a3a" stroke-width="1.3" stroke-linejoin="round"/><ellipse cx="1009.7" cy="373" rx="11.8" ry="6.5" fill="#a6a6a6" stroke="#3a3a3a" stroke-width="1.3" stroke-linejoin="round"/><ellipse cx="1575.6" cy="702.5" rx="12.8" ry="7" fill="#8a8a8a" stroke="#3a3a3a" stroke-width="1.3" stroke-linejoin="round"/><ellipse cx="1575.6" cy="700" rx="12.8" ry="7" fill="#a6a6a6" stroke="#3a3a3a" stroke-width="1.3" stroke-linejoin="round"/><g transform="translate(0 0)"><path d="M847 529 L876 542.4 V585.5 L847 569.5 Z" fill="#6a6a6a" stroke="#3a3a3a" stroke-width="1.3" stroke-linejoin="round"/><path d="M876 542.4 L879.4 541 V584 L876 585.5 Z" fill="#5a5a5a" stroke="#3a3a3a" stroke-width="1.3" stroke-linejoin="round"/><path d="M850 520 Q866 526 879.4 536.5 V541 L876 542.4 L847 529 V524 Z" fill="#9c9c9c" stroke="#3a3a3a" stroke-width="1.3" stroke-linejoin="round"/></g><g transform="translate(0 373)"><path d="M847 529 L876 542.4 V585.5 L847 569.5 Z" fill="#6a6a6a" stroke="#3a3a3a" stroke-width="1.3" stroke-linejoin="round"/><path d="M876 542.4 L879.4 541 V584 L876 585.5 Z" fill="#5a5a5a" stroke="#3a3a3a" stroke-width="1.3" stroke-linejoin="round"/><path d="M850 520 Q866 526 879.4 536.5 V541 L876 542.4 L847 529 V524 Z" fill="#9c9c9c" stroke="#3a3a3a" stroke-width="1.3" stroke-linejoin="round"/></g><line x1="1391" y1="761.4" x2="1391" y2="690" stroke="#1f6fd6" stroke-width="4"/><path d="M1391 677 L1398 696 Q1391 692 1384 696 Z" fill="#1f6fd6"/><path d="M1384 656 H1398 L1384 675 H1399" stroke="#5a9ae6" stroke-width="1.5" fill="none"/><line x1="1391" y1="761.4" x2="1452" y2="727" stroke="#1a9a48" stroke-width="3.5"/><path d="M1466 719 L1447 721 L1455 733 Z" fill="#1a9a48"/><path d="M1468 702 L1475 712 L1482 702 M1475 712 V724" stroke="#5acb8a" stroke-width="1.5" fill="none"/><line x1="1391" y1="761.4" x2="1450" y2="795" stroke="#e87a7a" stroke-width="2.5"/><path d="M1463 802.5 L1444 800 L1452 788 Z" fill="#e87a7a"/><path d="M1469 802 L1483 821 M1483 802 L1469 821" stroke="#e89a9a" stroke-width="1.5" fill="none"/><ellipse cx="1900.5" cy="412.5" rx="62" ry="30.5" fill="#727272"/><ellipse cx="1900.5" cy="412.5" rx="68.5" ry="36.5" fill="none" stroke="#8b8b8b" stroke-width="12"/><path d="M1866 366 L1903 344.5 L1940.4 366 L1903 384 Z" fill="#808080"/><path d="M1884 383 L1903 372 L1922 381 V410 L1913 416 V424 L1898 429 V418 L1885 412 Z" fill="#989898"/><path d="M1866 366 L1903 344.5 L1940.4 366 V408 L1903 430 L1866 408 Z M1866 366 L1903 384 L1940.4 366 M1903 384 V430" fill="none" stroke="#b0b0b0" stroke-width="1.2"/><line x1="2004.6" y1="592" x2="2004.6" y2="699" stroke="#3a78d0" stroke-width="2"/></g></svg>
<div class="a" style="left:1001.5px;top:1216.4px;width:528.3px;height:98px;background:rgba(138,138,138,0.59);"></div>
<div class="a" style="left:1508px;top:1220px;width:21px;height:94px;background:#c8c8c8;"></div>
<div class="a" style="left:1517px;top:1300px;width:1.5px;height:14px;background:#777;"></div>
<div class="t" style="left:1010.0px;top:1231.6px;font-size:15px;color:#ececec;font-family:'Liberation Mono',monospace;">: _settings</div>
<div class="t" style="left:1010.0px;top:1251.4px;font-size:15px;color:#ececec;font-family:'Liberation Mono',monospace;">: IMPORT</div>
<div class="t" style="left:1010.0px;top:1271.2px;font-size:15px;color:#ececec;font-family:'Liberation Mono',monospace;">:</div>
<div class="t" style="left:1010.0px;top:1291.0px;font-size:15px;color:#ececec;font-family:'Liberation Mono',monospace;">:</div>
<div class="t" style="left:1010.0px;top:1310.8px;font-size:15px;color:#ececec;font-family:'Liberation Mono',monospace;">: _settings</div>
<div class="a" style="left:1986px;top:281px;width:23px;height:1033px;background:linear-gradient(180deg,#787878 0%,#767676 53%,#727272 57%,#696969 67%,#5c5c5c 76%,#535353 84%,#4a4a4a 100%);"></div>
<div class="a" style="left:2009px;top:255px;width:446px;height:1059px;background:#2c3033;"></div>
<div class="a" style="left:2455px;top:268px;width:47px;height:1046px;background:#1b1c1e;"></div>
<div class="a" style="left:2455px;top:598px;width:47px;height:64px;background:#2c3033;"></div>
<svg style="left:2248px;top:262px;" width="22" height="3" viewBox="0 0 22 3" fill="none"><rect x="0.0" y="0" width="3" height="3" fill="#ddd"/><rect x="4.7" y="0" width="3" height="3" fill="#ddd"/><rect x="9.4" y="0" width="3" height="3" fill="#ddd"/><rect x="14.100000000000001" y="0" width="3" height="3" fill="#ddd"/><rect x="18.8" y="0" width="3" height="3" fill="#ddd"/></svg>
<div class="t" style="left:2025.0px;top:285.7px;font-size:24px;color:#e0e0e0;transform:scaleX(1.0188);transform-origin:0 0;">BOM Manager</div>
<svg style="left:2422px;top:290px;" width="6" height="17" viewBox="0 0 6 17" fill="none"><circle cx="3" cy="2" r="2" fill="#ddd"/><circle cx="3" cy="8.5" r="2" fill="#ddd"/><circle cx="3" cy="15" r="2" fill="#ddd"/></svg>
<div class="a" style="left:2009px;top:324.5px;width:446px;height:2.5px;background:#1f2225;"></div>
<div class="a" style="left:2018.6px;top:336px;width:343.4px;height:28px;background:#3c3f44;"></div>
<div class="a" style="left:2020px;top:338.5px;width:317px;height:22.5px;background:#393c41;border:1px solid #34373b"></div>
<div class="t" style="left:2021.3px;top:344.1px;font-size:14px;color:#e4e4e4;">1. Bill of Materials 10…50REFINC (Bottom level)</div>
<svg style="left:2342px;top:350px;" width="11" height="7" viewBox="0 0 11 7" fill="none"><path d="M1 1 L5.5 5.5 L10 1" stroke="#ccc" stroke-width="1.3" stroke-linejoin="round" stroke-linecap="round"/></svg>
<svg style="left:2381px;top:340px;" width="20" height="19" viewBox="0 0 20 19" fill="none"><path d="M7 2 Q1 5 2 11 Q3 15 6 17 M3 14 L6 17 L2.5 18" stroke="#bbb" stroke-width="1.6" stroke-linejoin="round" stroke-linecap="round"/><path d="M12 1.5 L15 1.5 Q19 5 18 11 Q17 15 13 17" stroke="#4a8ee0" stroke-width="1.8" stroke-linejoin="round" stroke-linecap="round"/><path d="M11 1 L14 1.5 L12 4.5" stroke="#4a8ee0" stroke-width="1.6" stroke-linejoin="round" stroke-linecap="round"/></svg>
<div class="a" style="left:2410px;top:338px;width:1.5px;height:24px;background:#45484c;"></div>
<svg style="left:2420px;top:339px;" width="23" height="22" viewBox="0 0 23 22" fill="none"><rect x="1" y="1" width="20" height="19" stroke="#ccc" stroke-width="1.3" stroke-linejoin="round" stroke-linecap="round"/><path d="M1 6 H21 M1 11 H21 M1 16 H11 M8 6 V20 M14 6 V11" stroke="#ccc" stroke-width="1.3" stroke-linejoin="round" stroke-linecap="round"/><rect x="1" y="1" width="20" height="5" fill="#ccc"/><path d="M12 16 H21 M18 13 L21 16 L18 19" stroke="#52b84e" stroke-width="1.6" stroke-linejoin="round" stroke-linecap="round"/></svg>
<div class="a" style="left:2018.6px;top:372.3px;width:173px;height:28.5px;background:#3c3f44;"></div>
<div class="t" style="left:2021.0px;top:380.9px;font-size:14px;color:#e4e4e4;">&lt;All columns&gt;</div>
<svg style="left:2172px;top:387px;" width="11" height="7" viewBox="0 0 11 7" fill="none"><path d="M1 1 L5.5 5.5 L10 1" stroke="#ccc" stroke-width="1.3" stroke-linejoin="round" stroke-linecap="round"/></svg>
<div class="a" style="left:2201px;top:372.3px;width:161px;height:28.5px;background:#3c3f44;"></div>
<div class="a" style="left:2203px;top:375px;width:133px;height:23px;background:#2c2f33;"></div>
<div class="t" style="left:2203.5px;top:378.1px;font-size:14px;color:#ccc;">,</div>
<div class="t" style="left:2207.0px;top:377.9px;font-size:14px;color:#e4e4e4;transform:scaleX(0.9353);transform-origin:0 0;">ARTICLENO</div>
<svg style="left:2342px;top:387px;" width="11" height="7" viewBox="0 0 11 7" fill="none"><path d="M1 1 L5.5 5.5 L10 1" stroke="#ccc" stroke-width="1.3" stroke-linejoin="round" stroke-linecap="round"/></svg>
<svg style="left:2380px;top:375px;" width="24" height="24" viewBox="0 0 24 24" fill="none"><rect x="1" y="1" width="19" height="18" stroke="#ccc" stroke-width="1.2" stroke-linejoin="round" stroke-linecap="round"/><path d="M1 7 H20 M1 13 H20 M7 1 V19 M13 1 V19" stroke="#ccc" stroke-width="1.2" stroke-linejoin="round" stroke-linecap="round"/><rect x="13" y="1" width="7" height="18" fill="#4a8ee0"/><path d="M17 16 V23 M13.5 19.5 H20.5" stroke="#52b84e" stroke-width="1.6" stroke-linejoin="round" stroke-linecap="round"/></svg>
<div class="a" style="left:2410px;top:375px;width:1.5px;height:24px;background:#45484c;"></div>
<svg style="left:2420px;top:375px;" width="23" height="23" viewBox="0 0 23 23" fill="none"><path d="M3 9 V3 H8 V9 M15 9 V3 H20 V9" stroke="#ddd" stroke-width="1.4" stroke-linejoin="round" stroke-linecap="round"/><path d="M1 12 L3 9 H8 L10 12 V21 H1 Z M13 12 L15 9 H20 L22 12 V21 H13 Z M8 11 H15" stroke="#ddd" stroke-width="1.4" stroke-linejoin="round" stroke-linecap="round"/><path d="M1 15 H10 M13 15 H22" stroke="#ddd" stroke-width="1.2" stroke-linejoin="round" stroke-linecap="round"/></svg>
<div class="a" style="left:2018px;top:409.3px;width:428.8px;height:26px;background:#26292c;border:2px solid #f0f0f0;border-radius:2px"></div>
<div class="t" style="left:2126.0px;top:415.1px;font-size:14px;color:#e8e8e8;transform:scaleX(0.9850);transform-origin:0 0;">Bill of Materials 1055_450REFINC</div>
<div class="a" style="left:2018px;top:449.2px;width:428.8px;height:26.5px;background:#fafafa;"></div>
<div class="a" style="left:2426px;top:449.2px;width:20.8px;height:671px;background:#f0f0f2;"></div>
<div class="a" style="left:2053.6px;top:449.2px;width:1px;height:26.5px;background:#d8d8d8;"></div>
<div class="a" style="left:2152.3px;top:449.2px;width:1px;height:26.5px;background:#d8d8d8;"></div>
<div class="a" style="left:2302.5px;top:449.2px;width:1px;height:26.5px;background:#d8d8d8;"></div>
<div class="a" style="left:2372.4px;top:449.2px;width:1px;height:26.5px;background:#d8d8d8;"></div>
<div class="t" style="left:2023.0px;top:456.0px;font-size:14px;color:#222;transform:scaleX(1.0098);transform-origin:0 0;">No.</div>
<div class="t" style="left:2067.6px;top:456.0px;font-size:14px;color:#222;transform:scaleX(0.9535);transform-origin:0 0;">Thumbnails</div>
<div class="t" style="left:2191.0px;top:456.0px;font-size:14px;color:#222;">Component</div>
<div class="t" style="left:2309.8px;top:456.0px;font-size:14px;color:#222;transform:scaleX(1.0434);transform-origin:0 0;">Quantity</div>
<div class="a" style="left:2018px;top:475.7px;width:408px;height:638.5px;background:#2c3033;"></div>
<div class="a" style="left:2436px;top:476px;width:2.5px;height:450px;background:#8a8a8a;"></div>
<div class="a" style="left:2053.6px;top:475.7px;width:1px;height:638.5px;background:#54575b;"></div>
<div class="a" style="left:2152.3px;top:475.7px;width:1px;height:638.5px;background:#54575b;"></div>
<div class="a" style="left:2302.5px;top:475.7px;width:1px;height:638.5px;background:#54575b;"></div>
<div class="a" style="left:2372.4px;top:475.7px;width:1px;height:638.5px;background:#54575b;"></div>
<div class="a" style="left:2018px;top:582.0px;width:354.4px;height:1px;background:#54575b;"></div>
<div class="a" style="left:2018px;top:688.5px;width:354.4px;height:1px;background:#54575b;"></div>
<div class="a" style="left:2018px;top:795.0px;width:354.4px;height:1px;background:#54575b;"></div>
<div class="a" style="left:2018px;top:901.5px;width:354.4px;height:1px;background:#54575b;"></div>
<div class="a" style="left:2018px;top:1008.0px;width:354.4px;height:1px;background:#54575b;"></div>
<div class="a" style="left:2018px;top:1114.5px;width:354.4px;height:1px;background:#54575b;"></div>
<div class="t" style="left:2020.5px;top:521.8px;font-size:14px;color:#e0e0e0;">1</div>
<div class="t" style="left:2156.0px;top:521.8px;font-size:14px;color:#e4e4e4;">0000-00168553</div>
<div class="t" style="left:2306.6px;top:521.8px;font-size:14px;color:#e0e0e0;">7</div>
<div class="t" style="left:2020.5px;top:628.6px;font-size:14px;color:#e0e0e0;">2</div>
<div class="t" style="left:2156.0px;top:628.6px;font-size:14px;color:#e4e4e4;transform:scaleX(0.9816);transform-origin:0 0;">1XX3_04_00_3(2)_P5</div>
<div class="t" style="left:2306.6px;top:628.6px;font-size:14px;color:#e0e0e0;">2</div>
<div class="t" style="left:2020.5px;top:735.4px;font-size:14px;color:#e0e0e0;">3</div>
<div class="t" style="left:2156.0px;top:735.4px;font-size:14px;color:#e4e4e4;">1XXX_01_04(B,2)_P7</div>
<div class="t" style="left:2306.6px;top:735.4px;font-size:14px;color:#e0e0e0;">1</div>
<div class="t" style="left:2020.5px;top:842.2px;font-size:14px;color:#e0e0e0;">4</div>
<div class="t" style="left:2156.0px;top:842.2px;font-size:14px;color:#e4e4e4;">1XXX_01_04(T,2)_P7</div>
<div class="t" style="left:2306.6px;top:842.2px;font-size:14px;color:#e0e0e0;">1</div>
<div class="t" style="left:2020.5px;top:949.0px;font-size:14px;color:#e0e0e0;">5</div>
<div class="t" style="left:2156.0px;top:949.0px;font-size:14px;color:#e4e4e4;">1XXX_01_05(2)_P8</div>
<div class="t" style="left:2306.6px;top:949.0px;font-size:14px;color:#e0e0e0;">2</div>
<div class="t" style="left:2020.5px;top:1055.8px;font-size:14px;color:#e0e0e0;">6</div>
<div class="t" style="left:2156.0px;top:1055.8px;font-size:14px;color:#e4e4e4;">186X_01_01(2)_P2</div>
<div class="t" style="left:2306.6px;top:1055.8px;font-size:14px;color:#e0e0e0;">1</div>
<svg style="left:2080px;top:505px;" width="44" height="46" viewBox="0 0 44 46" fill="none"><ellipse cx="22" cy="23" rx="17" ry="21" transform="rotate(25 22 23)" fill="#9a9a9a" stroke="#0c0c0c" stroke-width="1.6" stroke-linejoin="round"/><ellipse cx="25" cy="24" rx="13" ry="17" transform="rotate(25 25 24)" fill="#7a7a7a" stroke="#0c0c0c" stroke-width="1.6" stroke-linejoin="round"/><ellipse cx="27" cy="25" rx="10" ry="14" transform="rotate(25 27 25)" fill="#8a8a8a" stroke="#0c0c0c" stroke-width="1.6" stroke-linejoin="round"/></svg>
<svg style="left:2078px;top:603px;" width="52" height="64" viewBox="0 0 52 64" fill="none"><path d="M3 25 Q3 18 12 14 L45 2 Q50 1 50 8 V40 Q50 46 42 50 L10 62 Q3 63 3 56 Z" fill="#6a6a6a" stroke="#0c0c0c" stroke-width="1.6" stroke-linejoin="round" stroke-dasharray="3 2"/></svg>
<svg style="left:2070px;top:722px;" width="64" height="48" viewBox="0 0 64 48" fill="none"><path d="M4 8 L12 2 L52 28 L60 34 L60 42 L54 46 L6 18 L3 14 Z" fill="#bdbdbd" stroke="#0c0c0c" stroke-width="1.6" stroke-linejoin="round"/><path d="M6 14 L56 42" stroke="#0c0c0c" stroke-width="1.6" stroke-linejoin="round"/><rect x="10" y="6" width="7" height="8" transform="rotate(33 13 10)" fill="#777" stroke="#0c0c0c" stroke-width="1.6" stroke-linejoin="round"/><rect x="28" y="18" width="9" height="6" transform="rotate(33 32 21)" fill="#777" stroke="#0c0c0c" stroke-width="1.6" stroke-linejoin="round"/><rect x="46" y="30" width="7" height="7" transform="rotate(33 50 33)" fill="#777" stroke="#0c0c0c" stroke-width="1.6" stroke-linejoin="round"/></svg>
<svg style="left:2070px;top:828px;" width="64" height="48" viewBox="0 0 64 48" fill="none"><path d="M4 8 L12 2 L52 28 L60 34 L60 42 L54 46 L6 18 L3 14 Z" fill="#bdbdbd" stroke="#0c0c0c" stroke-width="1.6" stroke-linejoin="round"/><path d="M6 14 L56 42" stroke="#0c0c0c" stroke-width="1.6" stroke-linejoin="round"/><rect x="10" y="6" width="7" height="8" transform="rotate(33 13 10)" fill="#777" stroke="#0c0c0c" stroke-width="1.6" stroke-linejoin="round"/><rect x="28" y="18" width="9" height="6" transform="rotate(33 32 21)" fill="#777" stroke="#0c0c0c" stroke-width="1.6" stroke-linejoin="round"/><rect x="46" y="30" width="7" height="7" transform="rotate(33 50 33)" fill="#777" stroke="#0c0c0c" stroke-width="1.6" stroke-linejoin="round"/></svg>
<svg style="left:2084px;top:932px;" width="40" height="56" viewBox="0 0 40 56" fill="none"><path d="M8 12 Q6 4 16 3 L26 6 Q20 10 20 18 Z" fill="#888" stroke="#0c0c0c" stroke-width="1.6" stroke-linejoin="round"/><path d="M14 12 L34 4 V44 L16 52 Z" fill="#5e5e5e" stroke="#0c0c0c" stroke-width="1.6" stroke-linejoin="round"/><path d="M20 14 L31 9 V42 L20 47 Z" fill="#4c4c4c" stroke="#0c0c0c" stroke-width="1.6" stroke-linejoin="round"/><path d="M8 12 V36 L14 40" fill="none" stroke="#0c0c0c" stroke-width="1.6" stroke-linejoin="round"/></svg>
<svg style="left:2068px;top:1040px;" width="70" height="44" viewBox="0 0 70 44" fill="none"><path d="M2 22 L34 3 L68 20 L36 41 Z" fill="#c4c4c4" stroke="#0c0c0c" stroke-width="3" stroke-linejoin="round"/></svg>
<svg style="left:2246px;top:636px;" width="34" height="52" viewBox="0 0 34 52" fill="none"><path d="M2 2 V42 L11 33 L18 49 L25 46 L18 31 H31 Z" fill="#fafafa" stroke="#111" stroke-width="2" stroke-linejoin="round"/></svg>
<div class="a" style="left:2018px;top:1114px;width:354.4px;height:1.5px;background:#54575b;"></div>
<div class="a" style="left:2018px;top:1125px;width:406px;height:189px;background:#2a2d30;"></div>
<div class="a" style="left:2038px;top:1125px;width:386px;height:23px;background:#45484d;"></div>
<div class="a" style="left:2018px;top:1125px;width:20px;height:23px;background:#3a3d41;"></div>
<div class="a" style="left:2424.6px;top:1125px;width:22.4px;height:189px;background:#f0f0f2;"></div>
<div class="a" style="left:2435px;top:1148px;width:2.5px;height:166px;background:#8a8a8a;"></div>
<svg style="left:2023px;top:1131.6px;" width="12" height="12" viewBox="0 0 12 12" fill="none"><rect x="0" y="0" width="12" height="12" fill="#d8d8d8"/><path d="M2.5 6 H9.5" stroke="#222" stroke-width="2"/></svg>
<div class="t" style="left:2044.2px;top:1130.1px;font-size:15.5px;color:#eeeeee;font-weight:bold;transform:scaleX(1.0045);transform-origin:0 0;">Bill of materials properties</div>
<div class="a" style="left:2038px;top:1148.0px;width:386px;height:22.2px;background:#2e3134;"></div>
<div class="a" style="left:2232.6px;top:1148.0px;width:1px;height:23.7px;background:#222528;"></div>
<div class="t" style="left:2044.2px;top:1154.4px;font-size:14px;color:#e6e6e6;">Title</div>
<div class="t" style="left:2238.5px;top:1154.4px;font-size:14px;color:#e6e6e6;">Bill of Materials &lt;NAME&gt;</div>
<div class="a" style="left:2038px;top:1171.7px;width:386px;height:22.2px;background:#2e3134;"></div>
<div class="a" style="left:2232.6px;top:1171.7px;width:1px;height:23.7px;background:#222528;"></div>
<div class="t" style="left:2044.2px;top:1178.1px;font-size:14px;color:#e6e6e6;">Type</div>
<div class="t" style="left:2238.5px;top:1178.1px;font-size:14px;color:#e6e6e6;">Bottom level</div>
<div class="a" style="left:2038px;top:1195.4px;width:386px;height:22.2px;background:#2e3134;"></div>
<div class="a" style="left:2232.6px;top:1195.4px;width:1px;height:23.7px;background:#222528;"></div>
<div class="t" style="left:2044.2px;top:1201.8px;font-size:14px;color:#e6e6e6;">Property set</div>
<div class="t" style="left:2238.5px;top:1201.8px;font-size:14px;color:#e6e6e6;">Mechanical only</div>
<div class="a" style="left:2038px;top:1219.1px;width:386px;height:22.2px;background:#2e3134;"></div>
<div class="a" style="left:2232.6px;top:1219.1px;width:1px;height:23.7px;background:#222528;"></div>
<div class="t" style="left:2044.2px;top:1225.5px;font-size:14px;color:#e6e6e6;">Selection set</div>
<div class="t" style="left:2238.5px;top:1225.5px;font-size:14px;color:#8c8c8c;">Entire model</div>
<div class="a" style="left:2038px;top:1242.8px;width:386px;height:22.2px;background:#2e3134;"></div>
<div class="a" style="left:2232.6px;top:1242.8px;width:1px;height:23.7px;background:#222528;"></div>
<div class="t" style="left:2044.2px;top:1249.2px;font-size:14px;color:#e6e6e6;">Target component</div>
<div class="t" style="left:2240.0px;top:1249.2px;font-size:14px;color:#e6e6e6;">&lt;Root component&gt;</div>
<div class="a" style="left:2038px;top:1266.5px;width:386px;height:22.2px;background:#2e3134;"></div>
<div class="a" style="left:2232.6px;top:1266.5px;width:1px;height:23.7px;background:#222528;"></div>
<div class="t" style="left:2044.2px;top:1272.9px;font-size:14px;color:#e6e6e6;">Filter settings</div>
<div class="t" style="left:2240.0px;top:1272.9px;font-size:14px;color:#8c8c8c;">&lt;Expand to configure&gt;</div>
<div class="a" style="left:2038px;top:1290.2px;width:386px;height:22.2px;background:#2e3134;"></div>
<div class="a" style="left:2232.6px;top:1290.2px;width:1px;height:23.7px;background:#222528;"></div>
<div class="t" style="left:2044.2px;top:1296.6px;font-size:14px;color:#e6e6e6;">Sorting mode</div>
<div class="t" style="left:2238.5px;top:1296.6px;font-size:14px;color:#e6e6e6;">Automatic order</div>
<svg style="left:2023px;top:1274px;" width="12" height="12" viewBox="0 0 12 12" fill="none"><rect x="0" y="0" width="12" height="12" fill="#d8d8d8"/><path d="M2.5 6 H9.5 M6 2.5 V9.5" stroke="#222" stroke-width="2"/></svg>
<svg style="left:2462px;top:283px;" width="42" height="38" viewBox="0 0 42 38" fill="none"><path d="M4 10 L21 1 L38 10 V27 L21 36 L4 27 Z" stroke="#bbb" stroke-width="1.2" stroke-linejoin="round" stroke-linecap="round"/><path d="M11 8 L21 3 L32 9 V22 L21 28 L11 22 Z M11 8 L21 14 L32 9 M21 14 V28 M15 25 V33 M27 25 V33" stroke="#e0e0e0" stroke-width="1.4" stroke-linejoin="round" stroke-linecap="round"/></svg>
<svg style="left:2470px;top:352px;" width="34" height="30" viewBox="0 0 34 30" fill="none"><path d="M1 7 H34 M1 24 H34" stroke="#e0e0e0" stroke-width="1.4" stroke-linejoin="round" stroke-linecap="round"/><circle cx="10" cy="7" r="4" fill="#1b1c1e" stroke="#e0e0e0" stroke-width="1.4" stroke-linejoin="round" stroke-linecap="round"/><circle cx="24" cy="24" r="4" fill="#1b1c1e" stroke="#e0e0e0" stroke-width="1.4" stroke-linejoin="round" stroke-linecap="round"/></svg>
<svg style="left:2470px;top:418px;" width="32" height="34" viewBox="0 0 32 34" fill="none"><path d="M4 17 L14 4 H32 L22 17 Z" stroke="#e0e0e0" stroke-width="1.4" stroke-linejoin="round" stroke-linecap="round"/><path d="M2 23 L5 20 M2 23 H21 L31 11 M2 29 H21 L31 17" stroke="#e0e0e0" stroke-width="1.4" stroke-linejoin="round" stroke-linecap="round"/></svg>
<svg style="left:2472px;top:484px;" width="30" height="32" viewBox="0 0 30 32" fill="none"><rect x="1" y="1" width="11" height="11" stroke="#e0e0e0" stroke-width="1.4" stroke-linejoin="round" stroke-linecap="round"/><rect x="17" y="1" width="11" height="11" stroke="#e0e0e0" stroke-width="1.4" stroke-linejoin="round" stroke-linecap="round"/><rect x="1" y="16" width="11" height="11" stroke="#e0e0e0" stroke-width="1.4" stroke-linejoin="round" stroke-linecap="round"/><rect x="17" y="16" width="11" height="11" stroke="#e0e0e0" stroke-width="1.4" stroke-linejoin="round" stroke-linecap="round"/><path d="M1 31 H12 M17 31 H28" stroke="#e0e0e0" stroke-width="1.4" stroke-linejoin="round" stroke-linecap="round"/></svg>
<svg style="left:2472px;top:546px;" width="30" height="36" viewBox="0 0 30 36" fill="none"><path d="M15 1 Q28 1 28 12 Q28 20 16 27 Q2 20 2 12 Q2 1 15 1Z" stroke="#e0e0e0" stroke-width="1.4" stroke-linejoin="round" stroke-linecap="round"/><path d="M15 1 Q8 10 15 27 Q22 10 15 1 M2 12 Q10 14 15 27 M28 12 Q20 14 15 27" stroke="#e0e0e0" stroke-width="1.2" stroke-linejoin="round" stroke-linecap="round"/><rect x="12" y="29" width="6" height="5" stroke="#e0e0e0" stroke-width="1.2" stroke-linejoin="round" stroke-linecap="round"/></svg>
<svg style="left:2470px;top:616px;" width="32" height="30" viewBox="0 0 32 30" fill="none"><rect x="1" y="1" width="31" height="27" stroke="#e0e0e0" stroke-width="1.5" stroke-linejoin="round" stroke-linecap="round"/><path d="M1 10 H32 M1 19 H32 M12 1 V28 M22 1 V28" stroke="#e0e0e0" stroke-width="1.4" stroke-linejoin="round" stroke-linecap="round"/></svg>
<svg style="left:2470px;top:680px;" width="32" height="34" viewBox="0 0 32 34" fill="none"><path d="M4 30 Q0 26 4 22 L18 4 Q22 1 25 4 L30 9 V30 Z" stroke="#e0e0e0" stroke-width="1.4" stroke-linejoin="round" stroke-linecap="round"/><path d="M12 28 L28 12 V28Z" stroke="#e0e0e0" stroke-width="1.4" stroke-linejoin="round" stroke-linecap="round"/><path d="M6 30 Q10 30 10 26 Q10 22 6 22" stroke="#e0e0e0" stroke-width="1.2" stroke-linejoin="round" stroke-linecap="round"/></svg>
<svg style="left:2470px;top:748px;" width="32" height="28" viewBox="0 0 32 28" fill="none"><path d="M7 25 Q1 25 1 19 Q1 13 7 13 Q8 3 17 3 Q26 3 27 12 Q32 13 32 19 Q32 25 26 25 Z" stroke="#e0e0e0" stroke-width="1.4" stroke-linejoin="round" stroke-linecap="round"/><path d="M13 12 V19 M11 14 L13 12 L15 14 M19 19 V12 M17 17 L19 19 L21 17" stroke="#e0e0e0" stroke-width="1.2" stroke-linejoin="round" stroke-linecap="round"/></svg>
<svg style="left:2470px;top:814px;" width="32" height="30" viewBox="0 0 32 30" fill="none"><path d="M16 2 L31 28 H1 Z" stroke="#e0e0e0" stroke-width="1.5" stroke-linejoin="round" stroke-linecap="round"/><path d="M16 10 V20" stroke="#e0e0e0" stroke-width="2" stroke-linejoin="round" stroke-linecap="round"/><circle cx="16" cy="24" r="1.6" fill="#e0e0e0"/></svg>
<div class="a" style="left:1977px;top:218px;width:531px;height:8px;background:#22f5c4;"></div>
<div class="a" style="left:1977px;top:218px;width:9px;height:1096px;background:#22f5c4;"></div>
<div class="a" style="left:2502px;top:218px;width:6px;height:1096px;background:#22f5c4;"></div>
</body></html>
